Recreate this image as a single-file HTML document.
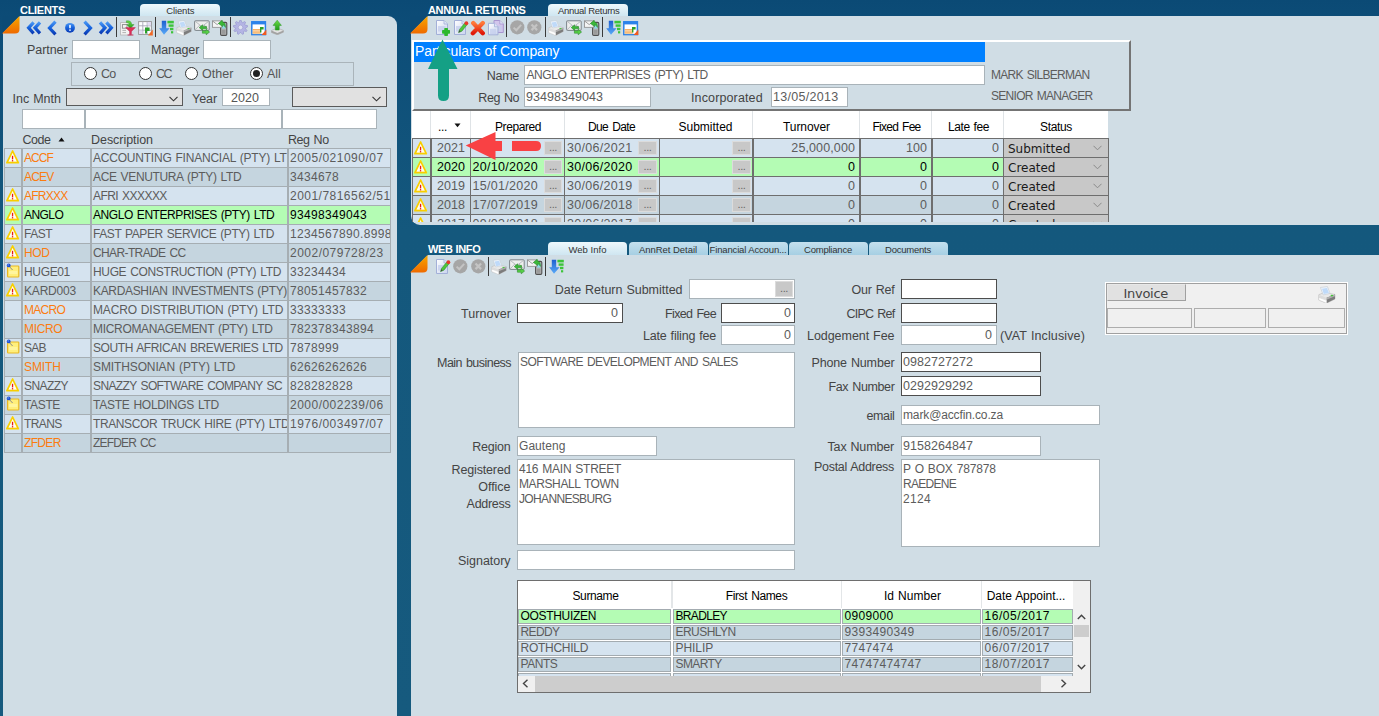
<!DOCTYPE html>
<html lang="en"><head><meta charset="utf-8"><title>Annual Returns</title>
<style>
html,body{margin:0;padding:0;}
body{width:1379px;height:716px;overflow:hidden;background:#0e4f79;}
#app{position:relative;width:1379px;height:716px;overflow:hidden;background:linear-gradient(180deg,#0b4a75 0px,#0d4d78 30px,#14587d 230px,#165a7e 716px);}
#app div,#app span.t,#app svg{position:absolute;box-sizing:border-box;}
span.t{white-space:pre;display:block;}
.panel{background:#d0dde5;}
.inp{background:#fff;border:1px solid #a9b3b9;}
.inpd{background:#fff;border:1px solid #4d4d4d;}
.cmb{background:#e1e1e1;border:1px solid #5a5a5a;}
.tab{background:linear-gradient(180deg,#eef8fc 0%,#cfe6f1 100%);border-radius:4px 4px 0 0;}
.tabi{background:linear-gradient(180deg,#c4e0ee 0%,#a6cfe3 100%);border-radius:4px 4px 0 0;}
.sep{background:#3c3c3c;width:1px;}
.c0{background:#d5e3ef;}
.c1{background:#c5d5df;}
.cs{background:#b4fcb4;}
.gl{border:1px solid #a3abb0;}
.gd{border:1px solid #6b6b6b;}
.btn3{background:#c8c8c8;border:1px solid #dcdcdc;}

</style></head>
<body>
<div id="app">
<div class="panel" style="left:3px;top:16px;width:394px;height:700px;border-radius:0 9px 0 0;"></div>
<svg style="left:2px;top:16px" width="18" height="18" viewBox="0 0 18 18"><path d="M0 0 L18 0 L0 18 Z" fill="#0c4b76"/></svg>
<span class="t" style="left:20.00px;top:2.69px;font:bold 11px/15px 'Liberation Sans',sans-serif;color:#fff;letter-spacing:-0.294px;">CLIENTS</span>
<div class="tab" style="left:140px;top:3.5px;width:80px;height:12.5px;"></div>
<span class="t" style="left:166.30px;top:3.71px;font:9.5px/14px 'Liberation Sans',sans-serif;color:#333;letter-spacing:-0.148px;">Clients</span>
<svg style="left:0;top:0" width="0" height="0"><defs>
<linearGradient id="gOr" x1="0" y1="0" x2="0" y2="1"><stop offset="0" stop-color="#f8a800"/><stop offset="1" stop-color="#ef6a00"/></linearGradient>
<linearGradient id="gBl" x1="0" y1="0" x2="0" y2="1"><stop offset="0" stop-color="#4a98f4"/><stop offset="0.5" stop-color="#1763dc"/><stop offset="1" stop-color="#0a3ab4"/></linearGradient>
<linearGradient id="gBl2" x1="0" y1="0" x2="0" y2="1"><stop offset="0" stop-color="#1d5fd0"/><stop offset="1" stop-color="#5aaaf8"/></linearGradient>
<linearGradient id="gGr" x1="0" y1="0" x2="0" y2="1"><stop offset="0" stop-color="#6fdc4a"/><stop offset="1" stop-color="#1f9a1a"/></linearGradient>
<linearGradient id="gRd" x1="0" y1="0" x2="0" y2="1"><stop offset="0" stop-color="#ff7a3a"/><stop offset="1" stop-color="#e01808"/></linearGradient>
<linearGradient id="gPg" x1="0" y1="0" x2="1" y2="1"><stop offset="0" stop-color="#ffffff"/><stop offset="1" stop-color="#c9d3ee"/></linearGradient>
<linearGradient id="gPr" x1="0" y1="0" x2="0" y2="1"><stop offset="0" stop-color="#f6f6f6"/><stop offset="1" stop-color="#9a9a9a"/></linearGradient>
</defs></svg>
<svg style="left:2px;top:16px" width="18" height="18" viewBox="0 0 18 18"><path d="M0 17.5 L17.5 0 L17.5 13 Q17.5 17.5 13 17.5 Z" fill="url(#gOr)"/></svg>
<svg style="left:26px;top:21px" width="16" height="14" viewBox="0 0 16 14"><path d="M7.6 1.3 L2.6 6.8 L7.6 12.3" fill="none" stroke="url(#gBl)" stroke-width="3.2" stroke-linejoin="miter"/><path d="M14 1.3 L9 6.8 L14 12.3" fill="none" stroke="url(#gBl)" stroke-width="3.2" stroke-linejoin="miter"/></svg>
<svg style="left:46px;top:20px" width="12" height="16" viewBox="0 0 12 16"><path d="M9.5 1.6 L3.5 8 L9.5 14.4" fill="none" stroke="url(#gBl)" stroke-width="3.2" stroke-linejoin="miter"/></svg>
<svg style="left:64px;top:22px" width="12" height="12" viewBox="0 0 12 12"><circle cx="6" cy="5.8" r="4.9" fill="url(#gBl)"/><rect x="5.1" y="2.8" width="1.8" height="3.6" rx="0.8" fill="#e8f2ff"/><rect x="5.1" y="7.2" width="1.8" height="1.8" rx="0.8" fill="#e8f2ff"/></svg>
<svg style="left:82px;top:20px" width="12" height="16" viewBox="0 0 12 16"><path d="M2.5 1.6 L8.5 8 L2.5 14.4" fill="none" stroke="url(#gBl)" stroke-width="3.2" stroke-linejoin="miter"/></svg>
<svg style="left:98px;top:21px" width="16" height="14" viewBox="0 0 16 14"><path d="M2 1.3 L7 6.8 L2 12.3" fill="none" stroke="url(#gBl)" stroke-width="3.2" stroke-linejoin="miter"/><path d="M8.4 1.3 L13.4 6.8 L8.4 12.3" fill="none" stroke="url(#gBl)" stroke-width="3.2" stroke-linejoin="miter"/></svg>
<div style="left:116px;top:17px;width:1px;height:19.5px;background:#3a3a3a;"></div>
<svg style="left:120px;top:20px" width="16" height="16" viewBox="0 0 16 16"><rect x="0.6" y="2.6" width="9.6" height="12.4" fill="#f2f2f2" stroke="#b4b4b4" stroke-width="0.8"/><rect x="2.4" y="4.6" width="4.6" height="3.6" fill="none" stroke="#888" stroke-width="0.9"/><path d="M2.4 10.4 L6 10.4 M2.4 12.6 L6 12.6" stroke="#aaa" stroke-width="0.9"/><path d="M6.4 0.8 Q11.6 0.2 11.6 4.6 L14 4.6 L10.4 8.6 L6.8 4.6 L9.2 4.6 Q9.2 2.6 6.4 2.6 Z" fill="url(#gGr)" stroke="#1f8a1f" stroke-width="0.4"/><path d="M5.6 7.6 L15.4 7.6 L11.4 11.4 L11.4 14.6 L9.6 14.6 L9.6 11.4 Z" fill="#e0305a" stroke="#b01840" stroke-width="0.4"/><path d="M7.6 15 L13.4 15" stroke="#c02048" stroke-width="0.9"/></svg>
<svg style="left:138px;top:20.5px" width="15" height="15" viewBox="0 0 15 15"><rect x="0.6" y="0.6" width="12.8" height="12.8" fill="#fdfdff" stroke="#9a9a9a" stroke-width="1"/><path d="M4.8 0.6 L4.8 13.4 M9.2 0.6 L9.2 13.4 M0.6 4.8 L13.4 4.8 M0.6 9.2 L13.4 9.2" stroke="#a8a8b8" stroke-width="0.9"/><rect x="9.6" y="1" width="3.4" height="3.4" fill="#e4dcf4"/><rect x="1" y="9.6" width="3.4" height="3.4" fill="#e4dcf4"/><path d="M10 14.6 L14.8 8.4 L14.8 14.6 Z" fill="#f26a28"/><path d="M7 6.4 L11.6 6.4 L11.6 10 L9 10 L9 12.6 L7 12.6 Z" fill="#2aa02a"/></svg>
<div style="left:155.3px;top:17px;width:1px;height:19.5px;background:#3a3a3a;"></div>
<svg style="left:159px;top:20.3px" width="16" height="16" viewBox="0 0 16 16"><path d="M2.8 0.8 L7.2 0.8 L7.2 8.2 L10.6 8.2 L5 14.8 L0.2 8.2 L2.8 8.2 Z" fill="url(#gBl2)"/><rect x="8.4" y="0.8" width="6.4" height="2.6" fill="#3cc43a"/><rect x="9.6" y="4.4" width="5" height="2.4" fill="#3cc43a"/><rect x="11" y="7.8" width="3.4" height="2.4" fill="#3cc43a"/><rect x="12" y="11.2" width="2.2" height="2.2" fill="#3cc43a"/></svg>
<svg style="left:176.3px;top:20px" width="16.0" height="16.0" viewBox="0 0 16 16"><path d="M0.7 7.8 L5.6 5.8 L15.2 7.6 L15.2 11.6 L7.6 15.4 L0.7 12.5 Z" fill="#e9e9e9" stroke="#b4b4b4" stroke-width="0.5"/><path d="M7.6 10.6 L15.2 7.7 L15.2 11.6 L7.6 15.4 Z" fill="#7c7c7c"/><path d="M7.6 10.6 L15.2 7.7 L15.2 9.2 L7.6 12.2 Z" fill="#b0b0b0"/><path d="M0.7 7.8 L7.6 10.6 L7.6 12.4 L0.7 9.8 Z" fill="#dcdcdc"/><path d="M0.7 10.2 L7.6 12.8 L7.6 15.4 L0.7 12.5 Z" fill="#ffffff" stroke="#cccccc" stroke-width="0.4"/><path d="M2.2 1.3 L8.4 0.5 L10.8 6.6 L4.6 8 Z" fill="#eef5fd" stroke="#c4ccd4" stroke-width="0.6"/><path d="M3.6 2.4 L8 1.8 L9.8 6.2 L5.2 7.2 Z" fill="#bfdaf9"/><ellipse cx="12.4" cy="8.6" rx="1.2" ry="0.7" fill="#44c83a"/></svg>
<svg style="left:194px;top:20px" width="16" height="16" viewBox="0 0 16 16"><rect x="0.6" y="0.8" width="14.6" height="9.6" rx="0.8" fill="#eeeeee" stroke="#7c848a" stroke-width="1"/><path d="M0.8 1 L7.9 6.6 L15 1 M0.8 10.2 L5.8 5 M15 10.2 L10 5" fill="none" stroke="#a8aeb2" stroke-width="0.8"/><path d="M5.2 7.6 L8.6 4.8 L8.6 6.4 L12.6 6.4 L12.6 8.8 L8.6 8.8 L8.6 10.4 Z" fill="#3cb83a" stroke="#1f7d1f" stroke-width="0.5"/><path d="M15.6 12 L12.2 9.2 L12.2 10.8 L8.4 10.8 L8.4 13.2 L12.2 13.2 L12.2 14.8 Z" fill="#58d048" stroke="#1f7d1f" stroke-width="0.5"/></svg>
<svg style="left:212px;top:20px" width="16" height="16" viewBox="0 0 16 16"><rect x="8.6" y="2.4" width="6.2" height="13" rx="1.2" fill="#b2b2b2" stroke="#505050" stroke-width="1.1"/><rect x="10" y="4.2" width="3.4" height="4.4" fill="#8fd8ea"/><rect x="10" y="9.8" width="3.4" height="4" fill="#9a9a9a"/><rect x="0.5" y="0.9" width="9.4" height="6.4" fill="#f4f4f4" stroke="#8a8a8a" stroke-width="0.8"/><path d="M0.6 1 L5.2 4.6 L9.8 1" fill="none" stroke="#8a8a8a" stroke-width="0.8"/><path d="M6.4 3.4 L10.2 0.2 L10.4 2 Q13.6 2.4 13.4 7.4 Q12.4 4.8 10.5 4.8 L10.6 6.6 Z" fill="#3cb83a" stroke="#1f8a1f" stroke-width="0.5"/></svg>
<div style="left:230.3px;top:17px;width:1px;height:19.5px;background:#3a3a3a;"></div>
<svg style="left:233.4px;top:20.4px" width="15" height="15" viewBox="0 0 15 15"><polygon points="6.87,0.23 8.13,0.23 8.85,2.38 9.70,2.69 11.63,1.50 12.59,2.31 11.76,4.42 12.21,5.20 14.45,5.54 14.67,6.77 12.68,7.85 12.52,8.75 14.03,10.44 13.40,11.53 11.18,11.08 10.48,11.66 10.54,13.93 9.36,14.35 7.95,12.58 7.05,12.58 5.64,14.35 4.46,13.93 4.52,11.66 3.82,11.08 1.60,11.53 0.97,10.44 2.48,8.75 2.32,7.85 0.33,6.77 0.55,5.54 2.79,5.20 3.24,4.42 2.41,2.31 3.37,1.50 5.30,2.69 6.15,2.38" fill="#b4b4e4" stroke="#9090cc" stroke-width="0.6" stroke-linejoin="round"/><circle cx="7.5" cy="7.4" r="2.3" fill="#dfe3f2" stroke="#9a9acc" stroke-width="0.6"/></svg>
<svg style="left:251px;top:20.6px" width="16" height="15" viewBox="0 0 16 15"><rect x="0.8" y="0.8" width="13.6" height="12.8" fill="#fff" stroke="#2b82ea" stroke-width="1.5"/><rect x="0.8" y="0.8" width="13.6" height="2.6" fill="#2b82ea"/><rect x="1.6" y="8.2" width="8" height="1.3" fill="#f6a040"/><rect x="1.6" y="10.4" width="8" height="1.3" fill="#f6a040"/><rect x="1.6" y="12.2" width="8" height="0.9" fill="#f6c080"/><path d="M10.6 14 L15.4 8.4 L15.4 14 Z" fill="#f05a20"/><path d="M9 6 L12.6 6 L12.6 8.6 L10.4 8.6 L10.4 11.6 L9 11.6 Z" fill="#2aa02a"/></svg>
<svg style="left:270.6px;top:20.4px" width="13" height="15" viewBox="0 0 13 15"><path d="M0.4 10.6 L6.2 8 L12.4 10.4 L12.4 12.2 L6.4 14.8 L0.4 12.4 Z" fill="#e2e2e2" stroke="#a4a4a4" stroke-width="0.6"/><path d="M0.4 10.6 L6.4 13 L12.4 10.4 L12.4 12.2 L6.4 14.8 L0.4 12.4 Z" fill="#a2a2a2"/><path d="M6.2 0.2 L10.4 5.4 L8.2 5.4 L8.2 10 L4.3 10 L4.3 5.4 L2 5.4 Z" fill="url(#gGr)" stroke="#2a9a22" stroke-width="0.5"/></svg>
<span class="t" style="left:27.00px;top:41.67px;font:12.5px/16px 'Liberation Sans',sans-serif;color:#444;letter-spacing:-0.066px;">Partner</span>
<div class="inp" style="left:72px;top:39.5px;width:68px;height:19.5px;"></div>
<span class="t" style="left:151.00px;top:41.67px;font:12.5px/16px 'Liberation Sans',sans-serif;color:#444;letter-spacing:-0.170px;">Manager</span>
<div class="inp" style="left:203px;top:39.5px;width:68px;height:19.5px;"></div>
<div style="left:71px;top:62px;width:283px;height:24px;border:1px solid #aab4ba;"></div>
<div style="left:83.5px;top:67px;width:13px;height:13px;border-radius:50%;background:#fff;border:1px solid #333;"></div>
<span class="t" style="left:101.00px;top:65.67px;font:12.5px/16px 'Liberation Sans',sans-serif;color:#555;letter-spacing:-0.889px;">Co</span>
<div style="left:138.5px;top:67px;width:13px;height:13px;border-radius:50%;background:#fff;border:1px solid #333;"></div>
<span class="t" style="left:156.00px;top:65.67px;font:12.5px/16px 'Liberation Sans',sans-serif;color:#555;letter-spacing:-1.627px;">CC</span>
<div style="left:184.5px;top:67px;width:13px;height:13px;border-radius:50%;background:#fff;border:1px solid #333;"></div>
<span class="t" style="left:202.00px;top:65.67px;font:12.5px/16px 'Liberation Sans',sans-serif;color:#555;letter-spacing:0.048px;">Other</span>
<div style="left:249.5px;top:67px;width:13px;height:13px;border-radius:50%;background:#fff;border:1px solid #333;"></div>
<div style="left:252.5px;top:70px;width:7px;height:7px;border-radius:50%;background:#222;"></div>
<span class="t" style="left:267.00px;top:65.67px;font:12.5px/16px 'Liberation Sans',sans-serif;color:#555;letter-spacing:-0.097px;">All</span>
<span class="t" style="left:12.50px;top:90.67px;font:12.5px/16px 'Liberation Sans',sans-serif;color:#444;letter-spacing:0.005px;word-spacing:0.521px;">Inc Mnth</span>
<div class="cmb" style="left:66px;top:88px;width:117px;height:18px;"></div>
<svg style="left:169px;top:96px" width="9" height="6" viewBox="0 0 9 6"><path d="M0.5 0.8 L4.5 4.8 L8.5 0.8" fill="none" stroke="#333" stroke-width="1.1"/></svg>
<span class="t" style="left:192.00px;top:90.67px;font:12.5px/16px 'Liberation Sans',sans-serif;color:#444;letter-spacing:-0.050px;">Year</span>
<div class="inp" style="left:222px;top:88px;width:48px;height:18px;"></div>
<span class="t" style="left:231.00px;top:89.67px;font:12.5px/16px 'Liberation Sans',sans-serif;color:#555;letter-spacing:0.048px;">2020</span>
<div class="cmb" style="left:292px;top:87px;width:95px;height:20px;"></div>
<svg style="left:372px;top:96px" width="9" height="6" viewBox="0 0 9 6"><path d="M0.5 0.8 L4.5 4.8 L8.5 0.8" fill="none" stroke="#333" stroke-width="1.1"/></svg>
<div class="inp" style="left:22px;top:109px;width:63px;height:20px;"></div>
<div class="inp" style="left:85px;top:109px;width:197px;height:20px;"></div>
<div class="inp" style="left:282px;top:109px;width:95px;height:20px;"></div>
<span class="t" style="left:22.50px;top:131.67px;font:12.5px/16px 'Liberation Sans',sans-serif;color:#444;letter-spacing:-0.462px;">Code</span>
<svg style="left:58px;top:137px" width="8" height="5" viewBox="0 0 8 5"><path d="M0.5 4.5 L3.5 0.5 L6.5 4.5 Z" fill="#111"/></svg>
<span class="t" style="left:91.00px;top:131.67px;font:12.5px/16px 'Liberation Sans',sans-serif;color:#444;letter-spacing:-0.047px;">Description</span>
<span class="t" style="left:288.00px;top:131.67px;font:12.5px/16px 'Liberation Sans',sans-serif;color:#444;letter-spacing:-0.453px;word-spacing:0.980px;">Reg No</span>
<div style="left:4px;top:148px;width:387px;height:305px;background:#a6aeb3;"></div>
<div class="c0" style="left:5px;top:149px;width:16px;height:17.5px;"></div>
<div class="c0" style="left:23px;top:149px;width:67px;height:17.5px;"></div>
<div class="c0" style="left:92px;top:149px;width:195px;height:17.5px;"></div>
<div class="c0" style="left:289px;top:149px;width:101px;height:17.5px;"></div>
<svg style="left:6px;top:150px" width="14" height="14" viewBox="0 0 14 14"><path d="M6.6 1 L12.3 12.7 L0.9 12.7 Z" fill="#fffef2" stroke="#fad400" stroke-width="1.7" stroke-linejoin="round"/><path d="M6.6 1.6 L11.6 12.2 L1.6 12.2 Z" fill="none" stroke="#f2b400" stroke-width="0.5" stroke-linejoin="round" opacity="0.6"/><rect x="5.9" y="5.8" width="1.3" height="3.6" fill="#e81818"/><rect x="5.9" y="10.1" width="1.3" height="1.3" fill="#e81818"/></svg>
<span class="t" style="left:24.00px;top:150.14px;font:12px/16px 'Liberation Sans',sans-serif;color:#fb7c10;letter-spacing:-0.919px;">ACCF</span>
<div style="left:92px;top:149px;width:195px;height:18px;overflow:hidden;">
<span class="t" style="left:1.00px;top:1.14px;font:12px/16px 'Liberation Sans',sans-serif;color:#5c5c5c;letter-spacing:-0.217px;word-spacing:0.882px;">ACCOUNTING FINANCIAL (PTY) LT</span>
</div>
<div style="left:289px;top:149px;width:101px;height:18px;overflow:hidden;">
<span class="t" style="left:1.00px;top:1.14px;font:12px/16px 'Liberation Sans',sans-serif;color:#5c5c5c;letter-spacing:0.485px;">2005/021090/07</span>
</div>
<div class="c1" style="left:5px;top:168px;width:16px;height:17.5px;"></div>
<div class="c1" style="left:23px;top:168px;width:67px;height:17.5px;"></div>
<div class="c1" style="left:92px;top:168px;width:195px;height:17.5px;"></div>
<div class="c1" style="left:289px;top:168px;width:101px;height:17.5px;"></div>
<span class="t" style="left:24.00px;top:169.14px;font:12px/16px 'Liberation Sans',sans-serif;color:#fb7c10;letter-spacing:-0.810px;">ACEV</span>
<div style="left:92px;top:168px;width:195px;height:18px;overflow:hidden;">
<span class="t" style="left:1.00px;top:1.14px;font:12px/16px 'Liberation Sans',sans-serif;color:#5c5c5c;letter-spacing:-0.361px;word-spacing:1.027px;">ACE VENUTURA (PTY) LTD</span>
</div>
<div style="left:289px;top:168px;width:101px;height:18px;overflow:hidden;">
<span class="t" style="left:1.00px;top:1.14px;font:12px/16px 'Liberation Sans',sans-serif;color:#5c5c5c;letter-spacing:0.327px;">3434678</span>
</div>
<div class="c0" style="left:5px;top:187px;width:16px;height:17.5px;"></div>
<div class="c0" style="left:23px;top:187px;width:67px;height:17.5px;"></div>
<div class="c0" style="left:92px;top:187px;width:195px;height:17.5px;"></div>
<div class="c0" style="left:289px;top:187px;width:101px;height:17.5px;"></div>
<svg style="left:6px;top:188px" width="14" height="14" viewBox="0 0 14 14"><path d="M6.6 1 L12.3 12.7 L0.9 12.7 Z" fill="#fffef2" stroke="#fad400" stroke-width="1.7" stroke-linejoin="round"/><path d="M6.6 1.6 L11.6 12.2 L1.6 12.2 Z" fill="none" stroke="#f2b400" stroke-width="0.5" stroke-linejoin="round" opacity="0.6"/><rect x="5.9" y="5.8" width="1.3" height="3.6" fill="#e81818"/><rect x="5.9" y="10.1" width="1.3" height="1.3" fill="#e81818"/></svg>
<span class="t" style="left:24.00px;top:188.14px;font:12px/16px 'Liberation Sans',sans-serif;color:#fb7c10;letter-spacing:-0.754px;">AFRXXX</span>
<div style="left:92px;top:187px;width:195px;height:18px;overflow:hidden;">
<span class="t" style="left:1.00px;top:1.14px;font:12px/16px 'Liberation Sans',sans-serif;color:#5c5c5c;letter-spacing:-0.556px;word-spacing:1.221px;">AFRI XXXXXX</span>
</div>
<div style="left:289px;top:187px;width:101px;height:18px;overflow:hidden;">
<span class="t" style="left:1.00px;top:1.14px;font:12px/16px 'Liberation Sans',sans-serif;color:#5c5c5c;letter-spacing:0.474px;">2001/7816562/51</span>
</div>
<div class="cs" style="left:5px;top:206px;width:16px;height:17.5px;"></div>
<div class="cs" style="left:23px;top:206px;width:67px;height:17.5px;"></div>
<div class="cs" style="left:92px;top:206px;width:195px;height:17.5px;"></div>
<div class="cs" style="left:289px;top:206px;width:101px;height:17.5px;"></div>
<svg style="left:6px;top:207px" width="14" height="14" viewBox="0 0 14 14"><path d="M6.6 1 L12.3 12.7 L0.9 12.7 Z" fill="#fffef2" stroke="#fad400" stroke-width="1.7" stroke-linejoin="round"/><path d="M6.6 1.6 L11.6 12.2 L1.6 12.2 Z" fill="none" stroke="#f2b400" stroke-width="0.5" stroke-linejoin="round" opacity="0.6"/><rect x="5.9" y="5.8" width="1.3" height="3.6" fill="#e81818"/><rect x="5.9" y="10.1" width="1.3" height="1.3" fill="#e81818"/></svg>
<span class="t" style="left:24.00px;top:207.14px;font:12px/16px 'Liberation Sans',sans-serif;color:#000;letter-spacing:-0.565px;">ANGLO</span>
<div style="left:92px;top:206px;width:195px;height:18px;overflow:hidden;">
<span class="t" style="left:1.00px;top:1.14px;font:12px/16px 'Liberation Sans',sans-serif;color:#000;letter-spacing:-0.437px;word-spacing:1.102px;">ANGLO ENTERPRISES (PTY) LTD</span>
</div>
<div style="left:289px;top:206px;width:101px;height:18px;overflow:hidden;">
<span class="t" style="left:1.00px;top:1.14px;font:12px/16px 'Liberation Sans',sans-serif;color:#000;letter-spacing:0.327px;">93498349043</span>
</div>
<div class="c0" style="left:5px;top:225px;width:16px;height:17.5px;"></div>
<div class="c0" style="left:23px;top:225px;width:67px;height:17.5px;"></div>
<div class="c0" style="left:92px;top:225px;width:195px;height:17.5px;"></div>
<div class="c0" style="left:289px;top:225px;width:101px;height:17.5px;"></div>
<svg style="left:6px;top:226px" width="14" height="14" viewBox="0 0 14 14"><path d="M6.6 1 L12.3 12.7 L0.9 12.7 Z" fill="#fffef2" stroke="#fad400" stroke-width="1.7" stroke-linejoin="round"/><path d="M6.6 1.6 L11.6 12.2 L1.6 12.2 Z" fill="none" stroke="#f2b400" stroke-width="0.5" stroke-linejoin="round" opacity="0.6"/><rect x="5.9" y="5.8" width="1.3" height="3.6" fill="#e81818"/><rect x="5.9" y="10.1" width="1.3" height="1.3" fill="#e81818"/></svg>
<span class="t" style="left:24.00px;top:226.14px;font:12px/16px 'Liberation Sans',sans-serif;color:#5c5c5c;letter-spacing:-0.444px;">FAST</span>
<div style="left:92px;top:225px;width:195px;height:18px;overflow:hidden;">
<span class="t" style="left:1.00px;top:1.14px;font:12px/16px 'Liberation Sans',sans-serif;color:#5c5c5c;letter-spacing:-0.422px;word-spacing:1.088px;">FAST PAPER SERVICE (PTY) LTD</span>
</div>
<div style="left:289px;top:225px;width:101px;height:18px;overflow:hidden;">
<span class="t" style="left:1.00px;top:1.14px;font:12px/16px 'Liberation Sans',sans-serif;color:#5c5c5c;letter-spacing:0.335px;">1234567890.8998</span>
</div>
<div class="c1" style="left:5px;top:244px;width:16px;height:17.5px;"></div>
<div class="c1" style="left:23px;top:244px;width:67px;height:17.5px;"></div>
<div class="c1" style="left:92px;top:244px;width:195px;height:17.5px;"></div>
<div class="c1" style="left:289px;top:244px;width:101px;height:17.5px;"></div>
<svg style="left:6px;top:245px" width="14" height="14" viewBox="0 0 14 14"><path d="M6.6 1 L12.3 12.7 L0.9 12.7 Z" fill="#fffef2" stroke="#fad400" stroke-width="1.7" stroke-linejoin="round"/><path d="M6.6 1.6 L11.6 12.2 L1.6 12.2 Z" fill="none" stroke="#f2b400" stroke-width="0.5" stroke-linejoin="round" opacity="0.6"/><rect x="5.9" y="5.8" width="1.3" height="3.6" fill="#e81818"/><rect x="5.9" y="10.1" width="1.3" height="1.3" fill="#e81818"/></svg>
<span class="t" style="left:24.00px;top:245.14px;font:12px/16px 'Liberation Sans',sans-serif;color:#fb7c10;letter-spacing:-0.315px;">HOD</span>
<div style="left:92px;top:244px;width:195px;height:18px;overflow:hidden;">
<span class="t" style="left:1.00px;top:1.14px;font:12px/16px 'Liberation Sans',sans-serif;color:#5c5c5c;letter-spacing:-0.618px;word-spacing:1.283px;">CHAR-TRADE CC</span>
</div>
<div style="left:289px;top:244px;width:101px;height:18px;overflow:hidden;">
<span class="t" style="left:1.00px;top:1.14px;font:12px/16px 'Liberation Sans',sans-serif;color:#5c5c5c;letter-spacing:0.485px;">2002/079728/23</span>
</div>
<div class="c0" style="left:5px;top:263px;width:16px;height:17.5px;"></div>
<div class="c0" style="left:23px;top:263px;width:67px;height:17.5px;"></div>
<div class="c0" style="left:92px;top:263px;width:195px;height:17.5px;"></div>
<div class="c0" style="left:289px;top:263px;width:101px;height:17.5px;"></div>
<svg style="left:6px;top:262.7px" width="14" height="15" viewBox="0 0 14 15"><rect x="1.6" y="3" width="11.2" height="11" rx="0.8" fill="#ffef7c" stroke="#e8b824" stroke-width="1.2"/><rect x="3" y="8" width="8.4" height="3" fill="#fff6a8" opacity="0.8"/><path d="M3.4 3.6 L6.6 7" stroke="#8c8c8c" stroke-width="1"/><circle cx="2.7" cy="2.4" r="1.9" fill="#1f52d6"/><circle cx="2.2" cy="1.9" r="0.7" fill="#7aa4f4"/></svg>
<span class="t" style="left:24.00px;top:264.14px;font:12px/16px 'Liberation Sans',sans-serif;color:#5c5c5c;letter-spacing:-0.347px;">HUGE01</span>
<div style="left:92px;top:263px;width:195px;height:18px;overflow:hidden;">
<span class="t" style="left:1.00px;top:1.14px;font:12px/16px 'Liberation Sans',sans-serif;color:#5c5c5c;letter-spacing:-0.353px;word-spacing:1.018px;">HUGE CONSTRUCTION (PTY) LTD</span>
</div>
<div style="left:289px;top:263px;width:101px;height:18px;overflow:hidden;">
<span class="t" style="left:1.00px;top:1.14px;font:12px/16px 'Liberation Sans',sans-serif;color:#5c5c5c;letter-spacing:0.327px;">33234434</span>
</div>
<div class="c1" style="left:5px;top:282px;width:16px;height:17.5px;"></div>
<div class="c1" style="left:23px;top:282px;width:67px;height:17.5px;"></div>
<div class="c1" style="left:92px;top:282px;width:195px;height:17.5px;"></div>
<div class="c1" style="left:289px;top:282px;width:101px;height:17.5px;"></div>
<svg style="left:6px;top:283px" width="14" height="14" viewBox="0 0 14 14"><path d="M6.6 1 L12.3 12.7 L0.9 12.7 Z" fill="#fffef2" stroke="#fad400" stroke-width="1.7" stroke-linejoin="round"/><path d="M6.6 1.6 L11.6 12.2 L1.6 12.2 Z" fill="none" stroke="#f2b400" stroke-width="0.5" stroke-linejoin="round" opacity="0.6"/><rect x="5.9" y="5.8" width="1.3" height="3.6" fill="#e81818"/><rect x="5.9" y="10.1" width="1.3" height="1.3" fill="#e81818"/></svg>
<span class="t" style="left:24.00px;top:283.14px;font:12px/16px 'Liberation Sans',sans-serif;color:#5c5c5c;letter-spacing:-0.189px;">KARD003</span>
<div style="left:92px;top:282px;width:195px;height:18px;overflow:hidden;">
<span class="t" style="left:1.00px;top:1.14px;font:12px/16px 'Liberation Sans',sans-serif;color:#5c5c5c;letter-spacing:-0.336px;word-spacing:1.002px;">KARDASHIAN INVESTMENTS (PTY)</span>
</div>
<div style="left:289px;top:282px;width:101px;height:18px;overflow:hidden;">
<span class="t" style="left:1.00px;top:1.14px;font:12px/16px 'Liberation Sans',sans-serif;color:#5c5c5c;letter-spacing:0.327px;">78051457832</span>
</div>
<div class="c0" style="left:5px;top:301px;width:16px;height:17.5px;"></div>
<div class="c0" style="left:23px;top:301px;width:67px;height:17.5px;"></div>
<div class="c0" style="left:92px;top:301px;width:195px;height:17.5px;"></div>
<div class="c0" style="left:289px;top:301px;width:101px;height:17.5px;"></div>
<span class="t" style="left:24.00px;top:302.14px;font:12px/16px 'Liberation Sans',sans-serif;color:#fb7c10;letter-spacing:-0.694px;">MACRO</span>
<div style="left:92px;top:301px;width:195px;height:18px;overflow:hidden;">
<span class="t" style="left:1.00px;top:1.14px;font:12px/16px 'Liberation Sans',sans-serif;color:#5c5c5c;letter-spacing:-0.170px;word-spacing:0.836px;">MACRO DISTRIBUTION (PTY) LTD</span>
</div>
<div style="left:289px;top:301px;width:101px;height:18px;overflow:hidden;">
<span class="t" style="left:1.00px;top:1.14px;font:12px/16px 'Liberation Sans',sans-serif;color:#5c5c5c;letter-spacing:0.327px;">33333333</span>
</div>
<div class="c1" style="left:5px;top:320px;width:16px;height:17.5px;"></div>
<div class="c1" style="left:23px;top:320px;width:67px;height:17.5px;"></div>
<div class="c1" style="left:92px;top:320px;width:195px;height:17.5px;"></div>
<div class="c1" style="left:289px;top:320px;width:101px;height:17.5px;"></div>
<span class="t" style="left:24.00px;top:321.14px;font:12px/16px 'Liberation Sans',sans-serif;color:#fb7c10;letter-spacing:-0.327px;">MICRO</span>
<div style="left:92px;top:320px;width:195px;height:18px;overflow:hidden;">
<span class="t" style="left:1.00px;top:1.14px;font:12px/16px 'Liberation Sans',sans-serif;color:#5c5c5c;letter-spacing:-0.320px;word-spacing:0.986px;">MICROMANAGEMENT (PTY) LTD</span>
</div>
<div style="left:289px;top:320px;width:101px;height:18px;overflow:hidden;">
<span class="t" style="left:1.00px;top:1.14px;font:12px/16px 'Liberation Sans',sans-serif;color:#5c5c5c;letter-spacing:0.327px;">782378343894</span>
</div>
<div class="c0" style="left:5px;top:339px;width:16px;height:17.5px;"></div>
<div class="c0" style="left:23px;top:339px;width:67px;height:17.5px;"></div>
<div class="c0" style="left:92px;top:339px;width:195px;height:17.5px;"></div>
<div class="c0" style="left:289px;top:339px;width:101px;height:17.5px;"></div>
<svg style="left:6px;top:338.7px" width="14" height="15" viewBox="0 0 14 15"><rect x="1.6" y="3" width="11.2" height="11" rx="0.8" fill="#ffef7c" stroke="#e8b824" stroke-width="1.2"/><rect x="3" y="8" width="8.4" height="3" fill="#fff6a8" opacity="0.8"/><path d="M3.4 3.6 L6.6 7" stroke="#8c8c8c" stroke-width="1"/><circle cx="2.7" cy="2.4" r="1.9" fill="#1f52d6"/><circle cx="2.2" cy="1.9" r="0.7" fill="#7aa4f4"/></svg>
<span class="t" style="left:24.00px;top:340.14px;font:12px/16px 'Liberation Sans',sans-serif;color:#5c5c5c;letter-spacing:-0.741px;">SAB</span>
<div style="left:92px;top:339px;width:195px;height:18px;overflow:hidden;">
<span class="t" style="left:1.00px;top:1.14px;font:12px/16px 'Liberation Sans',sans-serif;color:#5c5c5c;letter-spacing:-0.417px;word-spacing:1.083px;">SOUTH AFRICAN BREWERIES LTD</span>
</div>
<div style="left:289px;top:339px;width:101px;height:18px;overflow:hidden;">
<span class="t" style="left:1.00px;top:1.14px;font:12px/16px 'Liberation Sans',sans-serif;color:#5c5c5c;letter-spacing:0.327px;">7878999</span>
</div>
<div class="c1" style="left:5px;top:358px;width:16px;height:17.5px;"></div>
<div class="c1" style="left:23px;top:358px;width:67px;height:17.5px;"></div>
<div class="c1" style="left:92px;top:358px;width:195px;height:17.5px;"></div>
<div class="c1" style="left:289px;top:358px;width:101px;height:17.5px;"></div>
<span class="t" style="left:24.00px;top:359.14px;font:12px/16px 'Liberation Sans',sans-serif;color:#fb7c10;letter-spacing:-0.078px;">SMITH</span>
<div style="left:92px;top:358px;width:195px;height:18px;overflow:hidden;">
<span class="t" style="left:1.00px;top:1.14px;font:12px/16px 'Liberation Sans',sans-serif;color:#5c5c5c;letter-spacing:-0.118px;word-spacing:0.784px;">SMITHSONIAN (PTY) LTD</span>
</div>
<div style="left:289px;top:358px;width:101px;height:18px;overflow:hidden;">
<span class="t" style="left:1.00px;top:1.14px;font:12px/16px 'Liberation Sans',sans-serif;color:#5c5c5c;letter-spacing:0.327px;">62626262626</span>
</div>
<div class="c0" style="left:5px;top:377px;width:16px;height:17.5px;"></div>
<div class="c0" style="left:23px;top:377px;width:67px;height:17.5px;"></div>
<div class="c0" style="left:92px;top:377px;width:195px;height:17.5px;"></div>
<div class="c0" style="left:289px;top:377px;width:101px;height:17.5px;"></div>
<svg style="left:6px;top:378px" width="14" height="14" viewBox="0 0 14 14"><path d="M6.6 1 L12.3 12.7 L0.9 12.7 Z" fill="#fffef2" stroke="#fad400" stroke-width="1.7" stroke-linejoin="round"/><path d="M6.6 1.6 L11.6 12.2 L1.6 12.2 Z" fill="none" stroke="#f2b400" stroke-width="0.5" stroke-linejoin="round" opacity="0.6"/><rect x="5.9" y="5.8" width="1.3" height="3.6" fill="#e81818"/><rect x="5.9" y="10.1" width="1.3" height="1.3" fill="#e81818"/></svg>
<span class="t" style="left:24.00px;top:378.14px;font:12px/16px 'Liberation Sans',sans-serif;color:#5c5c5c;letter-spacing:-0.572px;">SNAZZY</span>
<div style="left:92px;top:377px;width:195px;height:18px;overflow:hidden;">
<span class="t" style="left:1.00px;top:1.14px;font:12px/16px 'Liberation Sans',sans-serif;color:#5c5c5c;letter-spacing:-0.606px;word-spacing:1.271px;">SNAZZY SOFTWARE COMPANY SC</span>
</div>
<div style="left:289px;top:377px;width:101px;height:18px;overflow:hidden;">
<span class="t" style="left:1.00px;top:1.14px;font:12px/16px 'Liberation Sans',sans-serif;color:#5c5c5c;letter-spacing:0.327px;">828282828</span>
</div>
<div class="c1" style="left:5px;top:396px;width:16px;height:17.5px;"></div>
<div class="c1" style="left:23px;top:396px;width:67px;height:17.5px;"></div>
<div class="c1" style="left:92px;top:396px;width:195px;height:17.5px;"></div>
<div class="c1" style="left:289px;top:396px;width:101px;height:17.5px;"></div>
<svg style="left:6px;top:395.7px" width="14" height="15" viewBox="0 0 14 15"><rect x="1.6" y="3" width="11.2" height="11" rx="0.8" fill="#ffef7c" stroke="#e8b824" stroke-width="1.2"/><rect x="3" y="8" width="8.4" height="3" fill="#fff6a8" opacity="0.8"/><path d="M3.4 3.6 L6.6 7" stroke="#8c8c8c" stroke-width="1"/><circle cx="2.7" cy="2.4" r="1.9" fill="#1f52d6"/><circle cx="2.2" cy="1.9" r="0.7" fill="#7aa4f4"/></svg>
<span class="t" style="left:24.00px;top:397.14px;font:12px/16px 'Liberation Sans',sans-serif;color:#5c5c5c;letter-spacing:-0.353px;">TASTE</span>
<div style="left:92px;top:396px;width:195px;height:18px;overflow:hidden;">
<span class="t" style="left:1.00px;top:1.14px;font:12px/16px 'Liberation Sans',sans-serif;color:#5c5c5c;letter-spacing:-0.266px;word-spacing:0.931px;">TASTE HOLDINGS LTD</span>
</div>
<div style="left:289px;top:396px;width:101px;height:18px;overflow:hidden;">
<span class="t" style="left:1.00px;top:1.14px;font:12px/16px 'Liberation Sans',sans-serif;color:#5c5c5c;letter-spacing:0.485px;">2000/002239/06</span>
</div>
<div class="c0" style="left:5px;top:415px;width:16px;height:17.5px;"></div>
<div class="c0" style="left:23px;top:415px;width:67px;height:17.5px;"></div>
<div class="c0" style="left:92px;top:415px;width:195px;height:17.5px;"></div>
<div class="c0" style="left:289px;top:415px;width:101px;height:17.5px;"></div>
<svg style="left:6px;top:416px" width="14" height="14" viewBox="0 0 14 14"><path d="M6.6 1 L12.3 12.7 L0.9 12.7 Z" fill="#fffef2" stroke="#fad400" stroke-width="1.7" stroke-linejoin="round"/><path d="M6.6 1.6 L11.6 12.2 L1.6 12.2 Z" fill="none" stroke="#f2b400" stroke-width="0.5" stroke-linejoin="round" opacity="0.6"/><rect x="5.9" y="5.8" width="1.3" height="3.6" fill="#e81818"/><rect x="5.9" y="10.1" width="1.3" height="1.3" fill="#e81818"/></svg>
<span class="t" style="left:24.00px;top:416.14px;font:12px/16px 'Liberation Sans',sans-serif;color:#5c5c5c;letter-spacing:-0.574px;">TRANS</span>
<div style="left:92px;top:415px;width:195px;height:18px;overflow:hidden;">
<span class="t" style="left:1.00px;top:1.14px;font:12px/16px 'Liberation Sans',sans-serif;color:#5c5c5c;letter-spacing:-0.398px;word-spacing:1.063px;">TRANSCOR TRUCK HIRE (PTY) LTD</span>
</div>
<div style="left:289px;top:415px;width:101px;height:18px;overflow:hidden;">
<span class="t" style="left:1.00px;top:1.14px;font:12px/16px 'Liberation Sans',sans-serif;color:#5c5c5c;letter-spacing:0.485px;">1976/003497/07</span>
</div>
<div class="c1" style="left:5px;top:434px;width:16px;height:17.5px;"></div>
<div class="c1" style="left:23px;top:434px;width:67px;height:17.5px;"></div>
<div class="c1" style="left:92px;top:434px;width:195px;height:17.5px;"></div>
<div class="c1" style="left:289px;top:434px;width:101px;height:17.5px;"></div>
<span class="t" style="left:24.00px;top:435.14px;font:12px/16px 'Liberation Sans',sans-serif;color:#fb7c10;letter-spacing:-0.661px;">ZFDER</span>
<div style="left:92px;top:434px;width:195px;height:18px;overflow:hidden;">
<span class="t" style="left:1.00px;top:1.14px;font:12px/16px 'Liberation Sans',sans-serif;color:#5c5c5c;letter-spacing:-0.841px;word-spacing:1.507px;">ZEFDER CC</span>
</div>
<div style="left:289px;top:434px;width:101px;height:18px;overflow:hidden;">
</div>
<div class="panel" style="left:411px;top:16px;width:968px;height:208.5px;border-radius:0 0 0 9px;"></div>
<svg style="left:410px;top:16px" width="18" height="18" viewBox="0 0 18 18"><path d="M0 0 L18 0 L0 18 Z" fill="#0c4b76"/></svg>
<span class="t" style="left:428.00px;top:2.69px;font:bold 11px/15px 'Liberation Sans',sans-serif;color:#fff;letter-spacing:-0.355px;">ANNUAL RETURNS</span>
<div class="tab" style="left:548px;top:3.5px;width:80px;height:12.5px;"></div>
<span class="t" style="left:558.05px;top:3.71px;font:9.5px/14px 'Liberation Sans',sans-serif;color:#333;letter-spacing:-0.284px;">Annual Returns</span>
<svg style="left:410px;top:16px" width="18" height="18" viewBox="0 0 18 18"><path d="M0 17.5 L17.5 0 L17.5 13 Q17.5 17.5 13 17.5 Z" fill="url(#gOr)"/></svg>
<svg style="left:436px;top:20px" width="16" height="16" viewBox="0 0 16 16"><path d="M0.5 0.5 L8.0 0.5 L11.5 4.0 L11.5 14.5 L0.5 14.5 Z" fill="url(#gPg)" stroke="#a3b0d8" stroke-width="1"/><path d="M8.0 0.5 L8.0 4.0 L11.5 4.0" fill="#dfe6f8" stroke="#a3b0d8" stroke-width="0.8"/><rect x="2" y="6" width="7.5" height="5.5" fill="#c3cdec" opacity="0.75"/><path d="M8.9 8.6 L11.3 8.6 L11.3 10.7 L13.4 10.7 L13.4 13.1 L11.3 13.1 L11.3 15.3 L8.9 15.3 L8.9 13.1 L6.7 13.1 L6.7 10.7 L8.9 10.7 Z" fill="#2cb82c" stroke="#2cb82c" stroke-width="1.2" stroke-linejoin="round"/></svg>
<svg style="left:454px;top:20px" width="16" height="16" viewBox="0 0 16 16"><path d="M0.5 0.5 L8.0 0.5 L11.5 4.0 L11.5 14.5 L0.5 14.5 Z" fill="url(#gPg)" stroke="#a3b0d8" stroke-width="1"/><path d="M8.0 0.5 L8.0 4.0 L11.5 4.0" fill="#dfe6f8" stroke="#a3b0d8" stroke-width="0.8"/><rect x="2" y="6" width="7.5" height="5.5" fill="#c3cdec" opacity="0.75"/><path d="M4.6 12.6 L5.6 9.4 L11 2.8 L13.2 4.6 L7.8 11.2 Z" fill="#4fc63c" stroke="#2d8f26" stroke-width="0.6"/><path d="M4.6 12.6 L5.3 10.2 L6.7 11.5 Z" fill="#444"/><circle cx="12.4" cy="3.2" r="1.9" fill="#e8392a"/></svg>
<svg style="left:470px;top:20px" width="16" height="16" viewBox="0 0 16 16"><path d="M3.2 3 L12.8 13.2 M12.8 3 L2.8 13.2" stroke="url(#gRd)" stroke-width="4.3" stroke-linecap="round" fill="none"/></svg>
<svg style="left:488.3px;top:20px" width="16" height="16" viewBox="0 0 16 16"><path d="M6.0 0.5 L11.8 0.5 L15.3 4.0 L15.3 12.5 L6.0 12.5 Z" fill="#d2c6ec" stroke="#a896d0" stroke-width="1"/><path d="M11.8 0.5 L11.8 4.0 L15.3 4.0" fill="#dfe6f8" stroke="#a896d0" stroke-width="0.8"/><rect x="7.5" y="6" width="5.800000000000001" height="5.5" fill="#c3cdec" opacity="0.75"/><path d="M0.5 3.3 L6.5 3.3 L10 6.8 L10 14.8 L0.5 14.8 Z" fill="url(#gPg)" stroke="#a3b0d8" stroke-width="1"/><path d="M6.5 3.3 L6.5 6.8 L10 6.8" fill="#dfe6f8" stroke="#a3b0d8" stroke-width="0.8"/><rect x="2" y="8.8" width="6" height="5.5" fill="#c3cdec" opacity="0.75"/></svg>
<div style="left:506px;top:17px;width:1px;height:19.5px;background:#3a3a3a;"></div>
<svg style="left:509.5px;top:20.4px" width="15" height="15" viewBox="0 0 15 15"><circle cx="7.3" cy="7.3" r="7.1" fill="#a6a6a6"/><path d="M3.6 7.6 L6.3 10.2 L11.2 4.8" fill="none" stroke="#c4c4c4" stroke-width="2"/></svg>
<svg style="left:527.3px;top:20.4px" width="15" height="15" viewBox="0 0 15 15"><circle cx="7.3" cy="7.3" r="7.1" fill="#a6a6a6"/><path d="M4.5 4.5 L10.1 10.1 M10.1 4.5 L4.5 10.1" fill="none" stroke="#c4c4c4" stroke-width="2.2"/></svg>
<div style="left:545.3px;top:17px;width:1px;height:19.5px;background:#3a3a3a;"></div>
<svg style="left:548px;top:20px" width="16.0" height="16.0" viewBox="0 0 16 16"><path d="M0.7 7.8 L5.6 5.8 L15.2 7.6 L15.2 11.6 L7.6 15.4 L0.7 12.5 Z" fill="#e9e9e9" stroke="#b4b4b4" stroke-width="0.5"/><path d="M7.6 10.6 L15.2 7.7 L15.2 11.6 L7.6 15.4 Z" fill="#7c7c7c"/><path d="M7.6 10.6 L15.2 7.7 L15.2 9.2 L7.6 12.2 Z" fill="#b0b0b0"/><path d="M0.7 7.8 L7.6 10.6 L7.6 12.4 L0.7 9.8 Z" fill="#dcdcdc"/><path d="M0.7 10.2 L7.6 12.8 L7.6 15.4 L0.7 12.5 Z" fill="#ffffff" stroke="#cccccc" stroke-width="0.4"/><path d="M2.2 1.3 L8.4 0.5 L10.8 6.6 L4.6 8 Z" fill="#eef5fd" stroke="#c4ccd4" stroke-width="0.6"/><path d="M3.6 2.4 L8 1.8 L9.8 6.2 L5.2 7.2 Z" fill="#bfdaf9"/><ellipse cx="12.4" cy="8.6" rx="1.2" ry="0.7" fill="#44c83a"/></svg>
<svg style="left:566px;top:20px" width="16" height="16" viewBox="0 0 16 16"><rect x="0.6" y="0.8" width="14.6" height="9.6" rx="0.8" fill="#eeeeee" stroke="#7c848a" stroke-width="1"/><path d="M0.8 1 L7.9 6.6 L15 1 M0.8 10.2 L5.8 5 M15 10.2 L10 5" fill="none" stroke="#a8aeb2" stroke-width="0.8"/><path d="M5.2 7.6 L8.6 4.8 L8.6 6.4 L12.6 6.4 L12.6 8.8 L8.6 8.8 L8.6 10.4 Z" fill="#3cb83a" stroke="#1f7d1f" stroke-width="0.5"/><path d="M15.6 12 L12.2 9.2 L12.2 10.8 L8.4 10.8 L8.4 13.2 L12.2 13.2 L12.2 14.8 Z" fill="#58d048" stroke="#1f7d1f" stroke-width="0.5"/></svg>
<svg style="left:584px;top:20px" width="16" height="16" viewBox="0 0 16 16"><rect x="8.6" y="2.4" width="6.2" height="13" rx="1.2" fill="#b2b2b2" stroke="#505050" stroke-width="1.1"/><rect x="10" y="4.2" width="3.4" height="4.4" fill="#8fd8ea"/><rect x="10" y="9.8" width="3.4" height="4" fill="#9a9a9a"/><rect x="0.5" y="0.9" width="9.4" height="6.4" fill="#f4f4f4" stroke="#8a8a8a" stroke-width="0.8"/><path d="M0.6 1 L5.2 4.6 L9.8 1" fill="none" stroke="#8a8a8a" stroke-width="0.8"/><path d="M6.4 3.4 L10.2 0.2 L10.4 2 Q13.6 2.4 13.4 7.4 Q12.4 4.8 10.5 4.8 L10.6 6.6 Z" fill="#3cb83a" stroke="#1f8a1f" stroke-width="0.5"/></svg>
<div style="left:602.2px;top:17px;width:1px;height:19.5px;background:#3a3a3a;"></div>
<svg style="left:606px;top:20.3px" width="16" height="16" viewBox="0 0 16 16"><path d="M2.8 0.8 L7.2 0.8 L7.2 8.2 L10.6 8.2 L5 14.8 L0.2 8.2 L2.8 8.2 Z" fill="url(#gBl2)"/><rect x="8.4" y="0.8" width="6.4" height="2.6" fill="#3cc43a"/><rect x="9.6" y="4.4" width="5" height="2.4" fill="#3cc43a"/><rect x="11" y="7.8" width="3.4" height="2.4" fill="#3cc43a"/><rect x="12" y="11.2" width="2.2" height="2.2" fill="#3cc43a"/></svg>
<svg style="left:623px;top:20.6px" width="16" height="15" viewBox="0 0 16 15"><rect x="0.8" y="0.8" width="13.6" height="12.8" fill="#fff" stroke="#2b82ea" stroke-width="1.5"/><rect x="0.8" y="0.8" width="13.6" height="2.6" fill="#2b82ea"/><rect x="1.6" y="8.2" width="8" height="1.3" fill="#f6a040"/><rect x="1.6" y="10.4" width="8" height="1.3" fill="#f6a040"/><rect x="1.6" y="12.2" width="8" height="0.9" fill="#f6c080"/><path d="M10.6 14 L15.4 8.4 L15.4 14 Z" fill="#f05a20"/><path d="M9 6 L12.6 6 L12.6 8.6 L10.4 8.6 L10.4 11.6 L9 11.6 Z" fill="#2aa02a"/></svg>
<div style="left:412px;top:40px;width:719px;height:71px;border:2px solid;border-color:#fff #747474 #747474 #fff;"></div>
<div style="left:414px;top:42px;width:571px;height:20px;background:#0080ff;"></div>
<span class="t" style="left:415.00px;top:41.65px;font:14px/18px 'Liberation Sans',sans-serif;color:#fff;letter-spacing:-0.061px;word-spacing:0.172px;">Particulars of Company</span>
<span class="t" style="left:486.74px;top:68.17px;font:12.5px/16px 'Liberation Sans',sans-serif;color:#444;letter-spacing:-0.271px;">Name</span>
<div class="inp" style="left:523.5px;top:65px;width:461px;height:19.5px;"></div>
<span class="t" style="left:526.50px;top:66.84px;font:12px/16px 'Liberation Sans',sans-serif;color:#5c5c5c;letter-spacing:-0.437px;word-spacing:1.102px;">ANGLO ENTERPRISES (PTY) LTD</span>
<span class="t" style="left:991.00px;top:66.84px;font:12px/16px 'Liberation Sans',sans-serif;color:#5c5c5c;letter-spacing:-0.733px;word-spacing:1.398px;">MARK SILBERMAN</span>
<span class="t" style="left:991.00px;top:87.84px;font:12px/16px 'Liberation Sans',sans-serif;color:#5c5c5c;letter-spacing:-0.707px;word-spacing:1.372px;">SENIOR MANAGER</span>
<span class="t" style="left:478.36px;top:89.67px;font:12.5px/16px 'Liberation Sans',sans-serif;color:#444;letter-spacing:-0.453px;word-spacing:0.980px;">Reg No</span>
<div class="inp" style="left:523.5px;top:87px;width:127.5px;height:19.5px;"></div>
<span class="t" style="left:526.00px;top:88.67px;font:12.5px/16px 'Liberation Sans',sans-serif;color:#5c5c5c;letter-spacing:0.048px;">93498349043</span>
<span class="t" style="left:691.00px;top:89.67px;font:12.5px/16px 'Liberation Sans',sans-serif;color:#444;letter-spacing:0.130px;">Incorporated</span>
<div class="inp" style="left:770.5px;top:87px;width:77.5px;height:19.5px;"></div>
<span class="t" style="left:773.00px;top:88.67px;font:12.5px/16px 'Liberation Sans',sans-serif;color:#5c5c5c;letter-spacing:0.307px;">13/05/2013</span>
<div style="left:412px;top:111px;width:697px;height:111px;overflow:hidden;">
<div style="left:0px;top:0px;width:696px;height:27px;background:#dfe3e6;"></div>
<div style="left:0px;top:0px;width:18px;height:27px;background:#fff;"></div>
<div style="left:19px;top:0px;width:38.5px;height:27px;background:#fff;"></div>
<div style="left:58.5px;top:0px;width:93.5px;height:27px;background:#fff;"></div>
<div style="left:152.5px;top:0px;width:94px;height:27px;background:#fff;"></div>
<div style="left:247px;top:0px;width:93px;height:27px;background:#fff;"></div>
<div style="left:341px;top:0px;width:106px;height:27px;background:#fff;"></div>
<div style="left:448px;top:0px;width:71px;height:27px;background:#fff;"></div>
<div style="left:520px;top:0px;width:70.5px;height:27px;background:#fff;"></div>
<div style="left:591.5px;top:0px;width:104.5px;height:27px;background:#fff;"></div>
<span class="t" style="left:83.00px;top:7.64px;font:12px/16px 'Liberation Sans',sans-serif;color:#000;letter-spacing:-0.421px;">Prepared</span>
<span class="t" style="left:176.00px;top:7.64px;font:12px/16px 'Liberation Sans',sans-serif;color:#000;letter-spacing:-0.623px;word-spacing:1.288px;">Due Date</span>
<span class="t" style="left:266.50px;top:7.64px;font:12px/16px 'Liberation Sans',sans-serif;color:#000;">Submitted</span>
<span class="t" style="left:371.00px;top:7.64px;font:12px/16px 'Liberation Sans',sans-serif;color:#000;letter-spacing:-0.071px;">Turnover</span>
<span class="t" style="left:460.50px;top:7.64px;font:12px/16px 'Liberation Sans',sans-serif;color:#000;letter-spacing:-0.752px;word-spacing:1.418px;">Fixed Fee</span>
<span class="t" style="left:536.00px;top:7.64px;font:12px/16px 'Liberation Sans',sans-serif;color:#000;letter-spacing:-0.434px;word-spacing:1.099px;">Late fee</span>
<span class="t" style="left:628.00px;top:7.64px;font:12px/16px 'Liberation Sans',sans-serif;color:#000;letter-spacing:-0.337px;">Status</span>
<span class="t" style="left:26.00px;top:7.64px;font:12px/16px 'Liberation Sans',sans-serif;color:#000;letter-spacing:-0.334px;">...</span>
<svg style="left:42px;top:12px" width="8" height="5" viewBox="0 0 8 5"><path d="M0.5 0.5 L6.5 0.5 L3.5 4.2 Z" fill="#111"/></svg>
<div style="left:0px;top:27px;width:697px;height:90px;background:#6e6e6e;"></div>
<div class="c0" style="left:1px;top:28px;width:17px;height:17.5px;"></div>
<div class="c0" style="left:19.5px;top:28px;width:38.0px;height:17.5px;"></div>
<div class="c0" style="left:59.0px;top:28px;width:93.0px;height:17.5px;"></div>
<div class="c0" style="left:153.0px;top:28px;width:93.5px;height:17.5px;"></div>
<div class="c0" style="left:247.5px;top:28px;width:92.5px;height:17.5px;"></div>
<div class="c0" style="left:341.5px;top:28px;width:105.5px;height:17.5px;"></div>
<div class="c0" style="left:448.5px;top:28px;width:70.5px;height:17.5px;"></div>
<div class="c0" style="left:520.5px;top:28px;width:70.0px;height:17.5px;"></div>
<div style="left:592px;top:28px;width:104px;height:17.5px;background:#c8c8c8;"></div>
<svg style="left:2px;top:30px" width="14" height="14" viewBox="0 0 14 14"><path d="M6.6 1 L12.3 12.7 L0.9 12.7 Z" fill="#fffef2" stroke="#fad400" stroke-width="1.7" stroke-linejoin="round"/><path d="M6.6 1.6 L11.6 12.2 L1.6 12.2 Z" fill="none" stroke="#f2b400" stroke-width="0.5" stroke-linejoin="round" opacity="0.6"/><rect x="5.9" y="5.8" width="1.3" height="3.6" fill="#e81818"/><rect x="5.9" y="10.1" width="1.3" height="1.3" fill="#e81818"/></svg>
<span class="t" style="left:25.00px;top:29.17px;font:12.5px/16px 'Liberation Sans',sans-serif;color:#5c5c5c;letter-spacing:0.048px;">2021</span>
<span class="t" style="left:155.00px;top:29.17px;font:12.5px/16px 'Liberation Sans',sans-serif;color:#5c5c5c;letter-spacing:0.307px;">30/06/2021</span>
<div class="btn3" style="left:131.5px;top:29.5px;width:18.5px;height:14px;"></div>
<span class="t" style="left:137.00px;top:28.69px;font:11px/15px 'Liberation Sans',sans-serif;color:#666;letter-spacing:-0.390px;">...</span>
<div class="btn3" style="left:226px;top:29.5px;width:18.5px;height:14px;"></div>
<span class="t" style="left:231.50px;top:28.69px;font:11px/15px 'Liberation Sans',sans-serif;color:#666;letter-spacing:-0.390px;">...</span>
<div class="btn3" style="left:320px;top:29.5px;width:18.5px;height:14px;"></div>
<span class="t" style="left:325.50px;top:28.69px;font:11px/15px 'Liberation Sans',sans-serif;color:#666;letter-spacing:-0.390px;">...</span>
<span class="t" style="left:379.36px;top:29.17px;font:12.5px/16px 'Liberation Sans',sans-serif;color:#5c5c5c;letter-spacing:0.108px;">25,000,000</span>
<span class="t" style="left:494.00px;top:29.17px;font:12.5px/16px 'Liberation Sans',sans-serif;color:#5c5c5c;letter-spacing:0.048px;">100</span>
<span class="t" style="left:580.05px;top:29.17px;font:12.5px/16px 'Liberation Sans',sans-serif;color:#5c5c5c;">0</span>
<span class="t" style="left:596.00px;top:30.35px;font:12px/16px 'DejaVu Sans','Liberation Sans',sans-serif;color:#1a1a1a;">Submitted</span>
<svg style="left:681px;top:34px" width="9" height="6" viewBox="0 0 9 6"><path d="M0.5 0.8 L4.5 4.8 L8.5 0.8" fill="none" stroke="#8a8a8a" stroke-width="1"/></svg>
<div class="cs" style="left:1px;top:47px;width:17px;height:17.5px;"></div>
<div class="cs" style="left:19.5px;top:47px;width:38.0px;height:17.5px;"></div>
<div class="cs" style="left:59.0px;top:47px;width:93.0px;height:17.5px;"></div>
<div class="cs" style="left:153.0px;top:47px;width:93.5px;height:17.5px;"></div>
<div class="cs" style="left:247.5px;top:47px;width:92.5px;height:17.5px;"></div>
<div class="cs" style="left:341.5px;top:47px;width:105.5px;height:17.5px;"></div>
<div class="cs" style="left:448.5px;top:47px;width:70.5px;height:17.5px;"></div>
<div class="cs" style="left:520.5px;top:47px;width:70.0px;height:17.5px;"></div>
<div style="left:592px;top:47px;width:104px;height:17.5px;background:#c8c8c8;"></div>
<svg style="left:2px;top:49px" width="14" height="14" viewBox="0 0 14 14"><path d="M6.6 1 L12.3 12.7 L0.9 12.7 Z" fill="#fffef2" stroke="#fad400" stroke-width="1.7" stroke-linejoin="round"/><path d="M6.6 1.6 L11.6 12.2 L1.6 12.2 Z" fill="none" stroke="#f2b400" stroke-width="0.5" stroke-linejoin="round" opacity="0.6"/><rect x="5.9" y="5.8" width="1.3" height="3.6" fill="#e81818"/><rect x="5.9" y="10.1" width="1.3" height="1.3" fill="#e81818"/></svg>
<span class="t" style="left:25.00px;top:48.17px;font:12.5px/16px 'Liberation Sans',sans-serif;color:#000;letter-spacing:0.048px;">2020</span>
<span class="t" style="left:60.50px;top:48.17px;font:12.5px/16px 'Liberation Sans',sans-serif;color:#000;letter-spacing:0.307px;">20/10/2020</span>
<span class="t" style="left:155.00px;top:48.17px;font:12.5px/16px 'Liberation Sans',sans-serif;color:#000;letter-spacing:0.307px;">30/06/2020</span>
<div class="btn3" style="left:131.5px;top:48.5px;width:18.5px;height:14px;"></div>
<span class="t" style="left:137.00px;top:47.69px;font:11px/15px 'Liberation Sans',sans-serif;color:#666;letter-spacing:-0.390px;">...</span>
<div class="btn3" style="left:226px;top:48.5px;width:18.5px;height:14px;"></div>
<span class="t" style="left:231.50px;top:47.69px;font:11px/15px 'Liberation Sans',sans-serif;color:#666;letter-spacing:-0.390px;">...</span>
<div class="btn3" style="left:320px;top:48.5px;width:18.5px;height:14px;"></div>
<span class="t" style="left:325.50px;top:47.69px;font:11px/15px 'Liberation Sans',sans-serif;color:#666;letter-spacing:-0.390px;">...</span>
<span class="t" style="left:436.05px;top:48.17px;font:12.5px/16px 'Liberation Sans',sans-serif;color:#000;">0</span>
<span class="t" style="left:508.05px;top:48.17px;font:12.5px/16px 'Liberation Sans',sans-serif;color:#000;">0</span>
<span class="t" style="left:580.05px;top:48.17px;font:12.5px/16px 'Liberation Sans',sans-serif;color:#000;">0</span>
<span class="t" style="left:596.00px;top:49.35px;font:12px/16px 'DejaVu Sans','Liberation Sans',sans-serif;color:#1a1a1a;">Created</span>
<svg style="left:681px;top:53px" width="9" height="6" viewBox="0 0 9 6"><path d="M0.5 0.8 L4.5 4.8 L8.5 0.8" fill="none" stroke="#8a8a8a" stroke-width="1"/></svg>
<div class="c0" style="left:1px;top:66px;width:17px;height:17.5px;"></div>
<div class="c0" style="left:19.5px;top:66px;width:38.0px;height:17.5px;"></div>
<div class="c0" style="left:59.0px;top:66px;width:93.0px;height:17.5px;"></div>
<div class="c0" style="left:153.0px;top:66px;width:93.5px;height:17.5px;"></div>
<div class="c0" style="left:247.5px;top:66px;width:92.5px;height:17.5px;"></div>
<div class="c0" style="left:341.5px;top:66px;width:105.5px;height:17.5px;"></div>
<div class="c0" style="left:448.5px;top:66px;width:70.5px;height:17.5px;"></div>
<div class="c0" style="left:520.5px;top:66px;width:70.0px;height:17.5px;"></div>
<div style="left:592px;top:66px;width:104px;height:17.5px;background:#c8c8c8;"></div>
<svg style="left:2px;top:68px" width="14" height="14" viewBox="0 0 14 14"><path d="M6.6 1 L12.3 12.7 L0.9 12.7 Z" fill="#fffef2" stroke="#fad400" stroke-width="1.7" stroke-linejoin="round"/><path d="M6.6 1.6 L11.6 12.2 L1.6 12.2 Z" fill="none" stroke="#f2b400" stroke-width="0.5" stroke-linejoin="round" opacity="0.6"/><rect x="5.9" y="5.8" width="1.3" height="3.6" fill="#e81818"/><rect x="5.9" y="10.1" width="1.3" height="1.3" fill="#e81818"/></svg>
<span class="t" style="left:25.00px;top:67.17px;font:12.5px/16px 'Liberation Sans',sans-serif;color:#5c5c5c;letter-spacing:0.048px;">2019</span>
<span class="t" style="left:60.50px;top:67.17px;font:12.5px/16px 'Liberation Sans',sans-serif;color:#5c5c5c;letter-spacing:0.307px;">15/01/2020</span>
<span class="t" style="left:155.00px;top:67.17px;font:12.5px/16px 'Liberation Sans',sans-serif;color:#5c5c5c;letter-spacing:0.307px;">30/06/2019</span>
<div class="btn3" style="left:131.5px;top:67.5px;width:18.5px;height:14px;"></div>
<span class="t" style="left:137.00px;top:66.69px;font:11px/15px 'Liberation Sans',sans-serif;color:#666;letter-spacing:-0.390px;">...</span>
<div class="btn3" style="left:226px;top:67.5px;width:18.5px;height:14px;"></div>
<span class="t" style="left:231.50px;top:66.69px;font:11px/15px 'Liberation Sans',sans-serif;color:#666;letter-spacing:-0.390px;">...</span>
<div class="btn3" style="left:320px;top:67.5px;width:18.5px;height:14px;"></div>
<span class="t" style="left:325.50px;top:66.69px;font:11px/15px 'Liberation Sans',sans-serif;color:#666;letter-spacing:-0.390px;">...</span>
<span class="t" style="left:436.05px;top:67.17px;font:12.5px/16px 'Liberation Sans',sans-serif;color:#5c5c5c;">0</span>
<span class="t" style="left:508.05px;top:67.17px;font:12.5px/16px 'Liberation Sans',sans-serif;color:#5c5c5c;">0</span>
<span class="t" style="left:580.05px;top:67.17px;font:12.5px/16px 'Liberation Sans',sans-serif;color:#5c5c5c;">0</span>
<span class="t" style="left:596.00px;top:68.35px;font:12px/16px 'DejaVu Sans','Liberation Sans',sans-serif;color:#1a1a1a;">Created</span>
<svg style="left:681px;top:72px" width="9" height="6" viewBox="0 0 9 6"><path d="M0.5 0.8 L4.5 4.8 L8.5 0.8" fill="none" stroke="#8a8a8a" stroke-width="1"/></svg>
<div class="c1" style="left:1px;top:85px;width:17px;height:17.5px;"></div>
<div class="c1" style="left:19.5px;top:85px;width:38.0px;height:17.5px;"></div>
<div class="c1" style="left:59.0px;top:85px;width:93.0px;height:17.5px;"></div>
<div class="c1" style="left:153.0px;top:85px;width:93.5px;height:17.5px;"></div>
<div class="c1" style="left:247.5px;top:85px;width:92.5px;height:17.5px;"></div>
<div class="c1" style="left:341.5px;top:85px;width:105.5px;height:17.5px;"></div>
<div class="c1" style="left:448.5px;top:85px;width:70.5px;height:17.5px;"></div>
<div class="c1" style="left:520.5px;top:85px;width:70.0px;height:17.5px;"></div>
<div style="left:592px;top:85px;width:104px;height:17.5px;background:#c8c8c8;"></div>
<svg style="left:2px;top:87px" width="14" height="14" viewBox="0 0 14 14"><path d="M6.6 1 L12.3 12.7 L0.9 12.7 Z" fill="#fffef2" stroke="#fad400" stroke-width="1.7" stroke-linejoin="round"/><path d="M6.6 1.6 L11.6 12.2 L1.6 12.2 Z" fill="none" stroke="#f2b400" stroke-width="0.5" stroke-linejoin="round" opacity="0.6"/><rect x="5.9" y="5.8" width="1.3" height="3.6" fill="#e81818"/><rect x="5.9" y="10.1" width="1.3" height="1.3" fill="#e81818"/></svg>
<span class="t" style="left:25.00px;top:86.17px;font:12.5px/16px 'Liberation Sans',sans-serif;color:#5c5c5c;letter-spacing:0.048px;">2018</span>
<span class="t" style="left:60.50px;top:86.17px;font:12.5px/16px 'Liberation Sans',sans-serif;color:#5c5c5c;letter-spacing:0.307px;">17/07/2019</span>
<span class="t" style="left:155.00px;top:86.17px;font:12.5px/16px 'Liberation Sans',sans-serif;color:#5c5c5c;letter-spacing:0.307px;">30/06/2018</span>
<div class="btn3" style="left:131.5px;top:86.5px;width:18.5px;height:14px;"></div>
<span class="t" style="left:137.00px;top:85.69px;font:11px/15px 'Liberation Sans',sans-serif;color:#666;letter-spacing:-0.390px;">...</span>
<div class="btn3" style="left:226px;top:86.5px;width:18.5px;height:14px;"></div>
<span class="t" style="left:231.50px;top:85.69px;font:11px/15px 'Liberation Sans',sans-serif;color:#666;letter-spacing:-0.390px;">...</span>
<div class="btn3" style="left:320px;top:86.5px;width:18.5px;height:14px;"></div>
<span class="t" style="left:325.50px;top:85.69px;font:11px/15px 'Liberation Sans',sans-serif;color:#666;letter-spacing:-0.390px;">...</span>
<span class="t" style="left:436.05px;top:86.17px;font:12.5px/16px 'Liberation Sans',sans-serif;color:#5c5c5c;">0</span>
<span class="t" style="left:508.05px;top:86.17px;font:12.5px/16px 'Liberation Sans',sans-serif;color:#5c5c5c;">0</span>
<span class="t" style="left:580.05px;top:86.17px;font:12.5px/16px 'Liberation Sans',sans-serif;color:#5c5c5c;">0</span>
<span class="t" style="left:596.00px;top:87.35px;font:12px/16px 'DejaVu Sans','Liberation Sans',sans-serif;color:#1a1a1a;">Created</span>
<svg style="left:681px;top:91px" width="9" height="6" viewBox="0 0 9 6"><path d="M0.5 0.8 L4.5 4.8 L8.5 0.8" fill="none" stroke="#8a8a8a" stroke-width="1"/></svg>
<div class="c0" style="left:1px;top:104px;width:17px;height:17.5px;"></div>
<div class="c0" style="left:19.5px;top:104px;width:38.0px;height:17.5px;"></div>
<div class="c0" style="left:59.0px;top:104px;width:93.0px;height:17.5px;"></div>
<div class="c0" style="left:153.0px;top:104px;width:93.5px;height:17.5px;"></div>
<div class="c0" style="left:247.5px;top:104px;width:92.5px;height:17.5px;"></div>
<div class="c0" style="left:341.5px;top:104px;width:105.5px;height:17.5px;"></div>
<div class="c0" style="left:448.5px;top:104px;width:70.5px;height:17.5px;"></div>
<div class="c0" style="left:520.5px;top:104px;width:70.0px;height:17.5px;"></div>
<div style="left:592px;top:104px;width:104px;height:17.5px;background:#c8c8c8;"></div>
<svg style="left:2px;top:106px" width="14" height="14" viewBox="0 0 14 14"><path d="M6.6 1 L12.3 12.7 L0.9 12.7 Z" fill="#fffef2" stroke="#fad400" stroke-width="1.7" stroke-linejoin="round"/><path d="M6.6 1.6 L11.6 12.2 L1.6 12.2 Z" fill="none" stroke="#f2b400" stroke-width="0.5" stroke-linejoin="round" opacity="0.6"/><rect x="5.9" y="5.8" width="1.3" height="3.6" fill="#e81818"/><rect x="5.9" y="10.1" width="1.3" height="1.3" fill="#e81818"/></svg>
<span class="t" style="left:25.00px;top:105.17px;font:12.5px/16px 'Liberation Sans',sans-serif;color:#5c5c5c;letter-spacing:0.048px;">2017</span>
<span class="t" style="left:60.50px;top:105.17px;font:12.5px/16px 'Liberation Sans',sans-serif;color:#5c5c5c;letter-spacing:0.307px;">09/03/2018</span>
<span class="t" style="left:155.00px;top:105.17px;font:12.5px/16px 'Liberation Sans',sans-serif;color:#5c5c5c;letter-spacing:0.307px;">30/06/2017</span>
<div class="btn3" style="left:131.5px;top:105.5px;width:18.5px;height:14px;"></div>
<span class="t" style="left:137.00px;top:104.69px;font:11px/15px 'Liberation Sans',sans-serif;color:#666;letter-spacing:-0.390px;">...</span>
<div class="btn3" style="left:226px;top:105.5px;width:18.5px;height:14px;"></div>
<span class="t" style="left:231.50px;top:104.69px;font:11px/15px 'Liberation Sans',sans-serif;color:#666;letter-spacing:-0.390px;">...</span>
<div class="btn3" style="left:320px;top:105.5px;width:18.5px;height:14px;"></div>
<span class="t" style="left:325.50px;top:104.69px;font:11px/15px 'Liberation Sans',sans-serif;color:#666;letter-spacing:-0.390px;">...</span>
<span class="t" style="left:436.05px;top:105.17px;font:12.5px/16px 'Liberation Sans',sans-serif;color:#5c5c5c;">0</span>
<span class="t" style="left:508.05px;top:105.17px;font:12.5px/16px 'Liberation Sans',sans-serif;color:#5c5c5c;">0</span>
<span class="t" style="left:580.05px;top:105.17px;font:12.5px/16px 'Liberation Sans',sans-serif;color:#5c5c5c;">0</span>
<span class="t" style="left:596.00px;top:106.35px;font:12px/16px 'DejaVu Sans','Liberation Sans',sans-serif;color:#1a1a1a;">Created</span>
<svg style="left:681px;top:110px" width="9" height="6" viewBox="0 0 9 6"><path d="M0.5 0.8 L4.5 4.8 L8.5 0.8" fill="none" stroke="#8a8a8a" stroke-width="1"/></svg>
</div>
<svg style="left:425px;top:36px" width="40" height="70" viewBox="0 0 40 70"><path d="M17.5 3.5 L32.5 33 L24 33 L24 59.5 Q24 65 18.5 65 Q13 65 13 59.5 L13 33 L3 33 Z" fill="#14a085"/></svg>
<svg style="left:462px;top:126px" width="84" height="40" viewBox="0 0 84 40"><path d="M3.7 19.5 L33.5 6 L33.5 15 L40 15 L40 25 L33.5 25 L33.5 34 Z" fill="#f94144"/><path d="M50 15 L74 15 Q79 15 79 20 Q79 25 74 25 L50 25 Z" fill="#f94144"/></svg>
<div class="panel" style="left:411px;top:255px;width:968px;height:461px;"></div>
<svg style="left:410px;top:255px" width="18" height="18" viewBox="0 0 18 18"><path d="M0 0 L18 0 L0 18 Z" fill="#14587d"/></svg>
<span class="t" style="left:428.00px;top:241.69px;font:bold 11px/15px 'Liberation Sans',sans-serif;color:#fff;letter-spacing:-0.312px;">WEB INFO</span>
<div class="tab" style="left:548px;top:242px;width:79px;height:13px;"></div>
<span class="t" style="left:568.50px;top:242.71px;font:9.5px/14px 'Liberation Sans',sans-serif;color:#333;letter-spacing:0.020px;">Web Info</span>
<div class="tabi" style="left:628.5px;top:242px;width:79px;height:13px;"></div>
<span class="t" style="left:639.00px;top:242.71px;font:9.5px/14px 'Liberation Sans',sans-serif;color:#333;letter-spacing:-0.047px;">AnnRet Detail</span>
<div class="tabi" style="left:708.5px;top:242px;width:79px;height:13px;"></div>
<span class="t" style="left:709.50px;top:242.71px;font:9.5px/14px 'Liberation Sans',sans-serif;color:#333;letter-spacing:-0.144px;">Financial Accoun...</span>
<div class="tabi" style="left:788.5px;top:242px;width:79px;height:13px;"></div>
<span class="t" style="left:804.00px;top:242.71px;font:9.5px/14px 'Liberation Sans',sans-serif;color:#333;letter-spacing:-0.216px;">Compliance</span>
<div class="tabi" style="left:868.5px;top:242px;width:79px;height:13px;"></div>
<span class="t" style="left:885.00px;top:242.71px;font:9.5px/14px 'Liberation Sans',sans-serif;color:#333;letter-spacing:-0.227px;">Documents</span>
<svg style="left:410px;top:255px" width="18" height="18" viewBox="0 0 18 18"><path d="M0 17.5 L17.5 0 L17.5 13 Q17.5 17.5 13 17.5 Z" fill="url(#gOr)"/></svg>
<svg style="left:436px;top:258.7px" width="16" height="16" viewBox="0 0 16 16"><path d="M0.5 0.5 L8.0 0.5 L11.5 4.0 L11.5 14.5 L0.5 14.5 Z" fill="url(#gPg)" stroke="#a3b0d8" stroke-width="1"/><path d="M8.0 0.5 L8.0 4.0 L11.5 4.0" fill="#dfe6f8" stroke="#a3b0d8" stroke-width="0.8"/><rect x="2" y="6" width="7.5" height="5.5" fill="#c3cdec" opacity="0.75"/><path d="M4.6 12.6 L5.6 9.4 L11 2.8 L13.2 4.6 L7.8 11.2 Z" fill="#4fc63c" stroke="#2d8f26" stroke-width="0.6"/><path d="M4.6 12.6 L5.3 10.2 L6.7 11.5 Z" fill="#444"/><circle cx="12.4" cy="3.2" r="1.9" fill="#e8392a"/></svg>
<svg style="left:452.5px;top:259.09999999999997px" width="15" height="15" viewBox="0 0 15 15"><circle cx="7.3" cy="7.3" r="7.1" fill="#a6a6a6"/><path d="M3.6 7.6 L6.3 10.2 L11.2 4.8" fill="none" stroke="#c4c4c4" stroke-width="2"/></svg>
<svg style="left:470.5px;top:259.09999999999997px" width="15" height="15" viewBox="0 0 15 15"><circle cx="7.3" cy="7.3" r="7.1" fill="#a6a6a6"/><path d="M4.5 4.5 L10.1 10.1 M10.1 4.5 L4.5 10.1" fill="none" stroke="#c4c4c4" stroke-width="2.2"/></svg>
<div style="left:488.3px;top:256.5px;width:1px;height:19.5px;background:#3a3a3a;"></div>
<svg style="left:491px;top:258.7px" width="16.0" height="16.0" viewBox="0 0 16 16"><path d="M0.7 7.8 L5.6 5.8 L15.2 7.6 L15.2 11.6 L7.6 15.4 L0.7 12.5 Z" fill="#e9e9e9" stroke="#b4b4b4" stroke-width="0.5"/><path d="M7.6 10.6 L15.2 7.7 L15.2 11.6 L7.6 15.4 Z" fill="#7c7c7c"/><path d="M7.6 10.6 L15.2 7.7 L15.2 9.2 L7.6 12.2 Z" fill="#b0b0b0"/><path d="M0.7 7.8 L7.6 10.6 L7.6 12.4 L0.7 9.8 Z" fill="#dcdcdc"/><path d="M0.7 10.2 L7.6 12.8 L7.6 15.4 L0.7 12.5 Z" fill="#ffffff" stroke="#cccccc" stroke-width="0.4"/><path d="M2.2 1.3 L8.4 0.5 L10.8 6.6 L4.6 8 Z" fill="#eef5fd" stroke="#c4ccd4" stroke-width="0.6"/><path d="M3.6 2.4 L8 1.8 L9.8 6.2 L5.2 7.2 Z" fill="#bfdaf9"/><ellipse cx="12.4" cy="8.6" rx="1.2" ry="0.7" fill="#44c83a"/></svg>
<svg style="left:509px;top:258.7px" width="16" height="16" viewBox="0 0 16 16"><rect x="0.6" y="0.8" width="14.6" height="9.6" rx="0.8" fill="#eeeeee" stroke="#7c848a" stroke-width="1"/><path d="M0.8 1 L7.9 6.6 L15 1 M0.8 10.2 L5.8 5 M15 10.2 L10 5" fill="none" stroke="#a8aeb2" stroke-width="0.8"/><path d="M5.2 7.6 L8.6 4.8 L8.6 6.4 L12.6 6.4 L12.6 8.8 L8.6 8.8 L8.6 10.4 Z" fill="#3cb83a" stroke="#1f7d1f" stroke-width="0.5"/><path d="M15.6 12 L12.2 9.2 L12.2 10.8 L8.4 10.8 L8.4 13.2 L12.2 13.2 L12.2 14.8 Z" fill="#58d048" stroke="#1f7d1f" stroke-width="0.5"/></svg>
<svg style="left:527px;top:258.7px" width="16" height="16" viewBox="0 0 16 16"><rect x="8.6" y="2.4" width="6.2" height="13" rx="1.2" fill="#b2b2b2" stroke="#505050" stroke-width="1.1"/><rect x="10" y="4.2" width="3.4" height="4.4" fill="#8fd8ea"/><rect x="10" y="9.8" width="3.4" height="4" fill="#9a9a9a"/><rect x="0.5" y="0.9" width="9.4" height="6.4" fill="#f4f4f4" stroke="#8a8a8a" stroke-width="0.8"/><path d="M0.6 1 L5.2 4.6 L9.8 1" fill="none" stroke="#8a8a8a" stroke-width="0.8"/><path d="M6.4 3.4 L10.2 0.2 L10.4 2 Q13.6 2.4 13.4 7.4 Q12.4 4.8 10.5 4.8 L10.6 6.6 Z" fill="#3cb83a" stroke="#1f8a1f" stroke-width="0.5"/></svg>
<div style="left:545.3px;top:256.5px;width:1px;height:19.5px;background:#3a3a3a;"></div>
<svg style="left:549px;top:259.0px" width="16" height="16" viewBox="0 0 16 16"><path d="M2.8 0.8 L7.2 0.8 L7.2 8.2 L10.6 8.2 L5 14.8 L0.2 8.2 L2.8 8.2 Z" fill="url(#gBl2)"/><rect x="8.4" y="0.8" width="6.4" height="2.6" fill="#3cc43a"/><rect x="9.6" y="4.4" width="5" height="2.4" fill="#3cc43a"/><rect x="11" y="7.8" width="3.4" height="2.4" fill="#3cc43a"/><rect x="12" y="11.2" width="2.2" height="2.2" fill="#3cc43a"/></svg>
<span class="t" style="left:554.76px;top:281.67px;font:12.5px/16px 'Liberation Sans',sans-serif;color:#444;letter-spacing:-0.024px;word-spacing:0.551px;">Date Return Submitted</span>
<div class="inp" style="left:689px;top:279px;width:106px;height:20px;"></div>
<div class="btn3" style="left:775px;top:281px;width:18px;height:16px;"></div>
<span class="t" style="left:780.00px;top:280.69px;font:11px/15px 'Liberation Sans',sans-serif;color:#666;letter-spacing:-0.390px;">...</span>
<span class="t" style="left:461.00px;top:305.67px;font:12.5px/16px 'Liberation Sans',sans-serif;color:#444;letter-spacing:0.056px;">Turnover</span>
<div class="inpd" style="left:517px;top:303px;width:105.5px;height:20px;"></div>
<span class="t" style="left:611.05px;top:305.17px;font:12.5px/16px 'Liberation Sans',sans-serif;color:#5c5c5c;">0</span>
<span class="t" style="left:665.00px;top:305.67px;font:12.5px/16px 'Liberation Sans',sans-serif;color:#444;letter-spacing:-0.638px;word-spacing:1.165px;">Fixed Fee</span>
<div class="inpd" style="left:721px;top:303px;width:74px;height:20px;"></div>
<span class="t" style="left:784.05px;top:305.17px;font:12.5px/16px 'Liberation Sans',sans-serif;color:#5c5c5c;">0</span>
<span class="t" style="left:643.00px;top:327.67px;font:12.5px/16px 'Liberation Sans',sans-serif;color:#444;letter-spacing:-0.185px;word-spacing:0.712px;">Late filing fee</span>
<div class="inp" style="left:721px;top:325px;width:74px;height:19.5px;"></div>
<span class="t" style="left:784.05px;top:327.17px;font:12.5px/16px 'Liberation Sans',sans-serif;color:#5c5c5c;">0</span>
<span class="t" style="left:437.00px;top:354.97px;font:12.5px/16px 'Liberation Sans',sans-serif;color:#444;letter-spacing:-0.535px;word-spacing:1.062px;">Main business</span>
<div class="inp" style="left:517.5px;top:352px;width:277.5px;height:75.5px;"></div>
<span class="t" style="left:520.00px;top:354.14px;font:12px/16px 'Liberation Sans',sans-serif;color:#5c5c5c;letter-spacing:-0.579px;word-spacing:1.245px;">SOFTWARE DEVELOPMENT AND SALES</span>
<span class="t" style="left:472.29px;top:438.67px;font:12.5px/16px 'Liberation Sans',sans-serif;color:#444;letter-spacing:-0.234px;">Region</span>
<div class="inp" style="left:517px;top:436px;width:140px;height:19.5px;"></div>
<span class="t" style="left:519.00px;top:437.84px;font:12px/16px 'Liberation Sans',sans-serif;color:#5c5c5c;letter-spacing:0.057px;">Gauteng</span>
<span class="t" style="left:451.56px;top:461.67px;font:12.5px/16px 'Liberation Sans',sans-serif;color:#444;letter-spacing:-0.151px;">Registered</span>
<span class="t" style="left:478.22px;top:478.97px;font:12.5px/16px 'Liberation Sans',sans-serif;color:#444;letter-spacing:-0.023px;">Office</span>
<span class="t" style="left:466.57px;top:495.97px;font:12.5px/16px 'Liberation Sans',sans-serif;color:#444;letter-spacing:-0.274px;">Address</span>
<div class="inp" style="left:517px;top:459px;width:278px;height:86px;"></div>
<span class="t" style="left:519.00px;top:461.04px;font:12px/16px 'Liberation Sans',sans-serif;color:#5c5c5c;letter-spacing:-0.245px;word-spacing:0.910px;">416 MAIN STREET</span>
<span class="t" style="left:519.00px;top:476.04px;font:12px/16px 'Liberation Sans',sans-serif;color:#5c5c5c;letter-spacing:-0.392px;word-spacing:1.057px;">MARSHALL TOWN</span>
<span class="t" style="left:519.00px;top:491.04px;font:12px/16px 'Liberation Sans',sans-serif;color:#5c5c5c;letter-spacing:-0.654px;">JOHANNESBURG</span>
<span class="t" style="left:458.08px;top:552.97px;font:12.5px/16px 'Liberation Sans',sans-serif;color:#444;letter-spacing:-0.043px;">Signatory</span>
<div class="inp" style="left:517px;top:550px;width:278px;height:20px;"></div>
<span class="t" style="left:851.50px;top:281.67px;font:12.5px/16px 'Liberation Sans',sans-serif;color:#444;letter-spacing:-0.215px;word-spacing:0.741px;">Our Ref</span>
<div class="inpd" style="left:901px;top:279px;width:95.5px;height:20px;"></div>
<span class="t" style="left:846.50px;top:305.67px;font:12.5px/16px 'Liberation Sans',sans-serif;color:#444;letter-spacing:-0.759px;word-spacing:1.286px;">CIPC Ref</span>
<div class="inpd" style="left:901px;top:303px;width:95.5px;height:20px;"></div>
<span class="t" style="left:807.00px;top:327.67px;font:12.5px/16px 'Liberation Sans',sans-serif;color:#444;letter-spacing:-0.049px;word-spacing:0.575px;">Lodgement Fee</span>
<div class="inp" style="left:901px;top:325px;width:95.5px;height:19.5px;"></div>
<span class="t" style="left:985.05px;top:327.17px;font:12.5px/16px 'Liberation Sans',sans-serif;color:#5c5c5c;">0</span>
<span class="t" style="left:1000.00px;top:327.67px;font:12.5px/16px 'Liberation Sans',sans-serif;color:#444;letter-spacing:0.127px;word-spacing:0.399px;">(VAT Inclusive)</span>
<span class="t" style="left:811.50px;top:354.97px;font:12.5px/16px 'Liberation Sans',sans-serif;color:#444;letter-spacing:-0.145px;word-spacing:0.672px;">Phone Number</span>
<div class="inpd" style="left:901px;top:352px;width:140px;height:20px;"></div>
<span class="t" style="left:903.00px;top:353.67px;font:12.5px/16px 'Liberation Sans',sans-serif;color:#5c5c5c;letter-spacing:0.048px;">0982727272</span>
<span class="t" style="left:828.50px;top:378.97px;font:12.5px/16px 'Liberation Sans',sans-serif;color:#444;letter-spacing:-0.366px;word-spacing:0.893px;">Fax Number</span>
<div class="inpd" style="left:901px;top:376px;width:140px;height:20px;"></div>
<span class="t" style="left:903.00px;top:377.67px;font:12.5px/16px 'Liberation Sans',sans-serif;color:#5c5c5c;letter-spacing:0.048px;">0292929292</span>
<span class="t" style="left:866.50px;top:408.07px;font:12.5px/16px 'Liberation Sans',sans-serif;color:#444;letter-spacing:-0.374px;">email</span>
<div class="inp" style="left:901px;top:405px;width:199px;height:20px;"></div>
<span class="t" style="left:903.00px;top:406.84px;font:12px/16px 'Liberation Sans',sans-serif;color:#5c5c5c;letter-spacing:-0.130px;">mark@accfin.co.za</span>
<span class="t" style="left:827.50px;top:438.67px;font:12.5px/16px 'Liberation Sans',sans-serif;color:#444;letter-spacing:-0.156px;word-spacing:0.683px;">Tax Number</span>
<div class="inp" style="left:901px;top:436px;width:140px;height:19.5px;"></div>
<span class="t" style="left:903.00px;top:437.67px;font:12.5px/16px 'Liberation Sans',sans-serif;color:#5c5c5c;letter-spacing:0.048px;">9158264847</span>
<span class="t" style="left:814.00px;top:458.67px;font:12.5px/16px 'Liberation Sans',sans-serif;color:#444;letter-spacing:-0.300px;word-spacing:0.827px;">Postal Address</span>
<div class="inp" style="left:901px;top:459px;width:199px;height:88px;"></div>
<span class="t" style="left:903.00px;top:461.04px;font:12px/16px 'Liberation Sans',sans-serif;color:#5c5c5c;letter-spacing:-0.149px;word-spacing:0.815px;">P O BOX 787878</span>
<span class="t" style="left:903.00px;top:476.04px;font:12px/16px 'Liberation Sans',sans-serif;color:#5c5c5c;letter-spacing:-0.713px;">RAEDENE</span>
<span class="t" style="left:903.00px;top:491.04px;font:12px/16px 'Liberation Sans',sans-serif;color:#5c5c5c;letter-spacing:0.327px;">2124</span>
<div style="left:1105px;top:282px;width:242.5px;height:52.5px;background:#f0f0f0;border:1px solid #fff;box-shadow:inset 1px 1px 0 #a0a0a0, inset -1px -1px 0 #a0a0a0;"></div>
<div style="left:1107px;top:284px;width:79px;height:17px;background:#e1e1e1;border:1px solid;border-color:#e8e8e8 #a0a0a0 #a0a0a0 #e8e8e8;"></div>
<span class="t" style="left:1123.50px;top:285.00px;font:13px/17px 'DejaVu Sans','Liberation Sans',sans-serif;color:#444;letter-spacing:-0.283px;">Invoice</span>
<div style="left:1107px;top:308px;width:85px;height:20px;background:#f0f0f0;border:1px solid #adadad;"></div>
<div style="left:1194px;top:308px;width:72px;height:20px;background:#f0f0f0;border:1px solid #adadad;"></div>
<div style="left:1268px;top:308px;width:77px;height:20px;background:#f0f0f0;border:1px solid #adadad;"></div>
<svg style="left:1318px;top:285.5px" width="17.9" height="17.9" viewBox="0 0 16 16"><path d="M0.7 7.8 L5.6 5.8 L15.2 7.6 L15.2 11.6 L7.6 15.4 L0.7 12.5 Z" fill="#e9e9e9" stroke="#b4b4b4" stroke-width="0.5"/><path d="M7.6 10.6 L15.2 7.7 L15.2 11.6 L7.6 15.4 Z" fill="#7c7c7c"/><path d="M7.6 10.6 L15.2 7.7 L15.2 9.2 L7.6 12.2 Z" fill="#b0b0b0"/><path d="M0.7 7.8 L7.6 10.6 L7.6 12.4 L0.7 9.8 Z" fill="#dcdcdc"/><path d="M0.7 10.2 L7.6 12.8 L7.6 15.4 L0.7 12.5 Z" fill="#ffffff" stroke="#cccccc" stroke-width="0.4"/><path d="M2.2 1.3 L8.4 0.5 L10.8 6.6 L4.6 8 Z" fill="#eef5fd" stroke="#c4ccd4" stroke-width="0.6"/><path d="M3.6 2.4 L8 1.8 L9.8 6.2 L5.2 7.2 Z" fill="#bfdaf9"/><ellipse cx="12.4" cy="8.6" rx="1.2" ry="0.7" fill="#44c83a"/></svg>
<div style="left:517px;top:580px;width:574px;height:113px;background:#f0f0f0;border:1px solid #6e6e6e;"></div>
<div style="left:518px;top:581px;width:555px;height:94.5px;overflow:hidden;background:#fff;">
<div style="left:0px;top:0px;width:555px;height:27px;background:#e3e6e8;"></div>
<div style="left:0px;top:0px;width:153px;height:27px;background:#fff;"></div>
<div style="left:154.5px;top:0px;width:168.5px;height:27px;background:#fff;"></div>
<div style="left:323.5px;top:0px;width:139.0px;height:27px;background:#fff;"></div>
<div style="left:463.5px;top:0px;width:91.5px;height:27px;background:#fff;"></div>
<span class="t" style="left:54.50px;top:7.24px;font:12px/16px 'Liberation Sans',sans-serif;color:#000;letter-spacing:-0.385px;">Surname</span>
<span class="t" style="left:207.75px;top:7.24px;font:12px/16px 'Liberation Sans',sans-serif;color:#000;letter-spacing:-0.384px;word-spacing:1.049px;">First Names</span>
<span class="t" style="left:366.00px;top:7.24px;font:12px/16px 'Liberation Sans',sans-serif;color:#000;letter-spacing:0.039px;word-spacing:0.627px;">Id Number</span>
<span class="t" style="left:468.75px;top:7.24px;font:12px/16px 'Liberation Sans',sans-serif;color:#000;letter-spacing:-0.063px;word-spacing:0.729px;">Date Appoint...</span>
<div class="cs" style="left:0px;top:27.5px;width:153px;height:15px;border:1px solid #a3abb0;"></div>
<span class="t" style="left:2.50px;top:27.34px;font:12px/16px 'Liberation Sans',sans-serif;color:#000;letter-spacing:-0.319px;">OOSTHUIZEN</span>
<div class="cs" style="left:155px;top:27.5px;width:168px;height:15px;border:1px solid #a3abb0;"></div>
<span class="t" style="left:157.50px;top:27.34px;font:12px/16px 'Liberation Sans',sans-serif;color:#000;letter-spacing:-0.653px;">BRADLEY</span>
<div class="cs" style="left:324px;top:27.5px;width:138.5px;height:15px;border:1px solid #a3abb0;"></div>
<span class="t" style="left:326.50px;top:27.34px;font:12px/16px 'Liberation Sans',sans-serif;color:#000;letter-spacing:0.327px;">0909000</span>
<div class="cs" style="left:464px;top:27.5px;width:91px;height:15px;border:1px solid #a3abb0;"></div>
<span class="t" style="left:466.50px;top:27.34px;font:12px/16px 'Liberation Sans',sans-serif;color:#000;letter-spacing:0.548px;">16/05/2017</span>
<div class="c1" style="left:0px;top:43.5px;width:153px;height:15px;border:1px solid #a3abb0;"></div>
<span class="t" style="left:2.50px;top:43.34px;font:12px/16px 'Liberation Sans',sans-serif;color:#5c5c5c;letter-spacing:-0.629px;">REDDY</span>
<div class="c1" style="left:155px;top:43.5px;width:168px;height:15px;border:1px solid #a3abb0;"></div>
<span class="t" style="left:157.50px;top:43.34px;font:12px/16px 'Liberation Sans',sans-serif;color:#5c5c5c;letter-spacing:-0.552px;">ERUSHLYN</span>
<div class="c1" style="left:324px;top:43.5px;width:138.5px;height:15px;border:1px solid #a3abb0;"></div>
<span class="t" style="left:326.50px;top:43.34px;font:12px/16px 'Liberation Sans',sans-serif;color:#5c5c5c;letter-spacing:0.327px;">9393490349</span>
<div class="c1" style="left:464px;top:43.5px;width:91px;height:15px;border:1px solid #a3abb0;"></div>
<span class="t" style="left:466.50px;top:43.34px;font:12px/16px 'Liberation Sans',sans-serif;color:#5c5c5c;letter-spacing:0.548px;">16/05/2017</span>
<div class="c0" style="left:0px;top:59.5px;width:153px;height:15px;border:1px solid #a3abb0;"></div>
<span class="t" style="left:2.50px;top:59.34px;font:12px/16px 'Liberation Sans',sans-serif;color:#5c5c5c;letter-spacing:-0.272px;">ROTHCHILD</span>
<div class="c0" style="left:155px;top:59.5px;width:168px;height:15px;border:1px solid #a3abb0;"></div>
<span class="t" style="left:157.50px;top:59.34px;font:12px/16px 'Liberation Sans',sans-serif;color:#5c5c5c;letter-spacing:-0.053px;">PHILIP</span>
<div class="c0" style="left:324px;top:59.5px;width:138.5px;height:15px;border:1px solid #a3abb0;"></div>
<span class="t" style="left:326.50px;top:59.34px;font:12px/16px 'Liberation Sans',sans-serif;color:#5c5c5c;letter-spacing:0.327px;">7747474</span>
<div class="c0" style="left:464px;top:59.5px;width:91px;height:15px;border:1px solid #a3abb0;"></div>
<span class="t" style="left:466.50px;top:59.34px;font:12px/16px 'Liberation Sans',sans-serif;color:#5c5c5c;letter-spacing:0.548px;">06/07/2017</span>
<div class="c1" style="left:0px;top:75.5px;width:153px;height:15px;border:1px solid #a3abb0;"></div>
<span class="t" style="left:2.50px;top:75.34px;font:12px/16px 'Liberation Sans',sans-serif;color:#5c5c5c;letter-spacing:-0.438px;">PANTS</span>
<div class="c1" style="left:155px;top:75.5px;width:168px;height:15px;border:1px solid #a3abb0;"></div>
<span class="t" style="left:157.50px;top:75.34px;font:12px/16px 'Liberation Sans',sans-serif;color:#5c5c5c;letter-spacing:-0.583px;">SMARTY</span>
<div class="c1" style="left:324px;top:75.5px;width:138.5px;height:15px;border:1px solid #a3abb0;"></div>
<span class="t" style="left:326.50px;top:75.34px;font:12px/16px 'Liberation Sans',sans-serif;color:#5c5c5c;letter-spacing:0.327px;">74747474747</span>
<div class="c1" style="left:464px;top:75.5px;width:91px;height:15px;border:1px solid #a3abb0;"></div>
<span class="t" style="left:466.50px;top:75.34px;font:12px/16px 'Liberation Sans',sans-serif;color:#5c5c5c;letter-spacing:0.548px;">18/07/2017</span>
<div class="c0" style="left:0px;top:91.5px;width:153px;height:15px;border:1px solid #a3abb0;"></div>
<div class="c0" style="left:155px;top:91.5px;width:168px;height:15px;border:1px solid #a3abb0;"></div>
<div class="c0" style="left:324px;top:91.5px;width:138.5px;height:15px;border:1px solid #a3abb0;"></div>
<div class="c0" style="left:464px;top:91.5px;width:91px;height:15px;border:1px solid #a3abb0;"></div>
</div>
<div style="left:1074px;top:625px;width:15px;height:11.5px;background:#cdcdcd;"></div>
<svg style="left:1077px;top:614px" width="9" height="6" viewBox="0 0 9 6"><path d="M0.8 5 L4.5 1.2 L8.2 5" fill="none" stroke="#444" stroke-width="1.4"/></svg>
<svg style="left:1077px;top:664px" width="9" height="6" viewBox="0 0 9 6"><path d="M0.8 1 L4.5 4.8 L8.2 1" fill="none" stroke="#444" stroke-width="1.4"/></svg>
<div style="left:535px;top:675.5px;width:505.5px;height:16.5px;background:#cdcdcd;"></div>
<svg style="left:522px;top:679px" width="7" height="9" viewBox="0 0 7 9"><path d="M5.5 0.8 L1.5 4.5 L5.5 8.2" fill="none" stroke="#444" stroke-width="1.4"/></svg>
<svg style="left:1060px;top:679px" width="7" height="9" viewBox="0 0 7 9"><path d="M1.5 0.8 L5.5 4.5 L1.5 8.2" fill="none" stroke="#444" stroke-width="1.4"/></svg>
</div>
</body></html>
